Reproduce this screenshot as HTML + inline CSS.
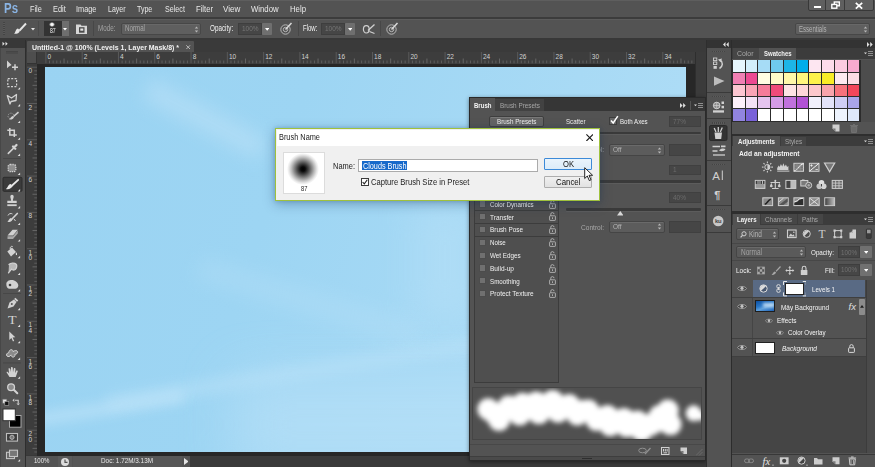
<!DOCTYPE html><html><head><meta charset="utf-8"><title>Photoshop - Brush Name</title><style>
*{box-sizing:border-box;margin:0;padding:0}
html,body{width:875px;height:467px;overflow:hidden;background:#535353;font-family:"Liberation Sans",sans-serif;font-size:9px;color:#dcdcdc}
.a{position:absolute}
.t{position:absolute;white-space:nowrap;line-height:1;transform-origin:0 0}
</style></head><body>
<div class="a" style="left:0px;top:40px;width:875px;height:427px;background:#383838;"></div>
<div class="a" style="left:26px;top:40px;width:680px;height:12px;background:#3a3a3a;"></div>
<div class="a" style="left:26.5px;top:40.5px;width:167.5px;height:12px;background:#535353;border-radius:1px 1px 0 0"></div>
<div class="t" style="left:32.20px;top:43.60px;font-size:8px;color:#f2f2f2;font-weight:bold;transform:scaleX(0.8711);">Untitled-1 @ 100% (Levels 1, Layer Mask/8) *</div>
<svg class="a" style="left:186.3px;top:45px;" width="4.4" height="4.4" viewBox="0 0 4.4 4.4"><path d="M.3 .3L4.100 4.100M4.100 .3L.3 4.100" stroke="#c4c4c4" stroke-width=".9"/></svg>
<div class="a" style="left:26px;top:52.4px;width:669px;height:11.3px;background:#3d3d3d;"></div>
<div class="a" style="left:695px;top:52.4px;width:10.8px;height:404px;background:#3b3b3b;border-left:1px solid #2e2e2e"></div>
<div class="a" style="left:26px;top:63.5px;width:10.5px;height:391px;background:#3c3c3c;"></div>
<div class="a" style="left:26.5px;top:52.4px;width:10px;height:11.3px;background:#4e4e4e;border-right:1px solid #333;border-bottom:1px solid #333"></div>
<div class="a" style="left:36.5px;top:63.7px;width:658.5px;height:392.3px;background:#272727;"></div>
<svg class="a" style="left:37px;top:52.4px;" width="658" height="11.3" viewBox="37 0 658 11.300"><rect x="45.30" y="0" width="1" height="11.300" fill="#5a5a5a"/><text x="47.40" y="7" font-size="6.500" fill="#d2d2d2" font-family="Liberation Sans,sans-serif">0</text><rect x="48.93" y="8.500" width="1" height="2.800" fill="#5e5e5e"/><rect x="52.56" y="8.500" width="1" height="2.800" fill="#5e5e5e"/><rect x="56.19" y="8.500" width="1" height="2.800" fill="#5e5e5e"/><rect x="59.82" y="8.500" width="1" height="2.800" fill="#5e5e5e"/><rect x="63.45" y="6.500" width="1" height="4.800" fill="#666"/><rect x="67.08" y="8.500" width="1" height="2.800" fill="#5e5e5e"/><rect x="70.71" y="8.500" width="1" height="2.800" fill="#5e5e5e"/><rect x="74.34" y="8.500" width="1" height="2.800" fill="#5e5e5e"/><rect x="77.97" y="8.500" width="1" height="2.800" fill="#5e5e5e"/><rect x="81.60" y="0" width="1" height="11.300" fill="#5a5a5a"/><text x="83.70" y="7" font-size="6.500" fill="#d2d2d2" font-family="Liberation Sans,sans-serif">2</text><rect x="85.23" y="8.500" width="1" height="2.800" fill="#5e5e5e"/><rect x="88.86" y="8.500" width="1" height="2.800" fill="#5e5e5e"/><rect x="92.49" y="8.500" width="1" height="2.800" fill="#5e5e5e"/><rect x="96.12" y="8.500" width="1" height="2.800" fill="#5e5e5e"/><rect x="99.75" y="6.500" width="1" height="4.800" fill="#666"/><rect x="103.38" y="8.500" width="1" height="2.800" fill="#5e5e5e"/><rect x="107.01" y="8.500" width="1" height="2.800" fill="#5e5e5e"/><rect x="110.64" y="8.500" width="1" height="2.800" fill="#5e5e5e"/><rect x="114.27" y="8.500" width="1" height="2.800" fill="#5e5e5e"/><rect x="117.90" y="0" width="1" height="11.300" fill="#5a5a5a"/><text x="120.00" y="7" font-size="6.500" fill="#d2d2d2" font-family="Liberation Sans,sans-serif">4</text><rect x="121.53" y="8.500" width="1" height="2.800" fill="#5e5e5e"/><rect x="125.16" y="8.500" width="1" height="2.800" fill="#5e5e5e"/><rect x="128.79" y="8.500" width="1" height="2.800" fill="#5e5e5e"/><rect x="132.42" y="8.500" width="1" height="2.800" fill="#5e5e5e"/><rect x="136.05" y="6.500" width="1" height="4.800" fill="#666"/><rect x="139.68" y="8.500" width="1" height="2.800" fill="#5e5e5e"/><rect x="143.31" y="8.500" width="1" height="2.800" fill="#5e5e5e"/><rect x="146.94" y="8.500" width="1" height="2.800" fill="#5e5e5e"/><rect x="150.57" y="8.500" width="1" height="2.800" fill="#5e5e5e"/><rect x="154.20" y="0" width="1" height="11.300" fill="#5a5a5a"/><text x="156.30" y="7" font-size="6.500" fill="#d2d2d2" font-family="Liberation Sans,sans-serif">6</text><rect x="157.83" y="8.500" width="1" height="2.800" fill="#5e5e5e"/><rect x="161.46" y="8.500" width="1" height="2.800" fill="#5e5e5e"/><rect x="165.09" y="8.500" width="1" height="2.800" fill="#5e5e5e"/><rect x="168.72" y="8.500" width="1" height="2.800" fill="#5e5e5e"/><rect x="172.35" y="6.500" width="1" height="4.800" fill="#666"/><rect x="175.98" y="8.500" width="1" height="2.800" fill="#5e5e5e"/><rect x="179.61" y="8.500" width="1" height="2.800" fill="#5e5e5e"/><rect x="183.24" y="8.500" width="1" height="2.800" fill="#5e5e5e"/><rect x="186.87" y="8.500" width="1" height="2.800" fill="#5e5e5e"/><rect x="190.50" y="0" width="1" height="11.300" fill="#5a5a5a"/><text x="192.60" y="7" font-size="6.500" fill="#d2d2d2" font-family="Liberation Sans,sans-serif">8</text><rect x="194.13" y="8.500" width="1" height="2.800" fill="#5e5e5e"/><rect x="197.76" y="8.500" width="1" height="2.800" fill="#5e5e5e"/><rect x="201.39" y="8.500" width="1" height="2.800" fill="#5e5e5e"/><rect x="205.02" y="8.500" width="1" height="2.800" fill="#5e5e5e"/><rect x="208.65" y="6.500" width="1" height="4.800" fill="#666"/><rect x="212.28" y="8.500" width="1" height="2.800" fill="#5e5e5e"/><rect x="215.91" y="8.500" width="1" height="2.800" fill="#5e5e5e"/><rect x="219.54" y="8.500" width="1" height="2.800" fill="#5e5e5e"/><rect x="223.17" y="8.500" width="1" height="2.800" fill="#5e5e5e"/><rect x="226.80" y="0" width="1" height="11.300" fill="#5a5a5a"/><text x="228.90" y="7" font-size="6.500" fill="#d2d2d2" font-family="Liberation Sans,sans-serif">10</text><rect x="230.43" y="8.500" width="1" height="2.800" fill="#5e5e5e"/><rect x="234.06" y="8.500" width="1" height="2.800" fill="#5e5e5e"/><rect x="237.69" y="8.500" width="1" height="2.800" fill="#5e5e5e"/><rect x="241.32" y="8.500" width="1" height="2.800" fill="#5e5e5e"/><rect x="244.95" y="6.500" width="1" height="4.800" fill="#666"/><rect x="248.58" y="8.500" width="1" height="2.800" fill="#5e5e5e"/><rect x="252.21" y="8.500" width="1" height="2.800" fill="#5e5e5e"/><rect x="255.84" y="8.500" width="1" height="2.800" fill="#5e5e5e"/><rect x="259.47" y="8.500" width="1" height="2.800" fill="#5e5e5e"/><rect x="263.10" y="0" width="1" height="11.300" fill="#5a5a5a"/><text x="265.20" y="7" font-size="6.500" fill="#d2d2d2" font-family="Liberation Sans,sans-serif">12</text><rect x="266.73" y="8.500" width="1" height="2.800" fill="#5e5e5e"/><rect x="270.36" y="8.500" width="1" height="2.800" fill="#5e5e5e"/><rect x="273.99" y="8.500" width="1" height="2.800" fill="#5e5e5e"/><rect x="277.62" y="8.500" width="1" height="2.800" fill="#5e5e5e"/><rect x="281.25" y="6.500" width="1" height="4.800" fill="#666"/><rect x="284.88" y="8.500" width="1" height="2.800" fill="#5e5e5e"/><rect x="288.51" y="8.500" width="1" height="2.800" fill="#5e5e5e"/><rect x="292.14" y="8.500" width="1" height="2.800" fill="#5e5e5e"/><rect x="295.77" y="8.500" width="1" height="2.800" fill="#5e5e5e"/><rect x="299.40" y="0" width="1" height="11.300" fill="#5a5a5a"/><text x="301.50" y="7" font-size="6.500" fill="#d2d2d2" font-family="Liberation Sans,sans-serif">14</text><rect x="303.03" y="8.500" width="1" height="2.800" fill="#5e5e5e"/><rect x="306.66" y="8.500" width="1" height="2.800" fill="#5e5e5e"/><rect x="310.29" y="8.500" width="1" height="2.800" fill="#5e5e5e"/><rect x="313.92" y="8.500" width="1" height="2.800" fill="#5e5e5e"/><rect x="317.55" y="6.500" width="1" height="4.800" fill="#666"/><rect x="321.18" y="8.500" width="1" height="2.800" fill="#5e5e5e"/><rect x="324.81" y="8.500" width="1" height="2.800" fill="#5e5e5e"/><rect x="328.44" y="8.500" width="1" height="2.800" fill="#5e5e5e"/><rect x="332.07" y="8.500" width="1" height="2.800" fill="#5e5e5e"/><rect x="335.70" y="0" width="1" height="11.300" fill="#5a5a5a"/><text x="337.80" y="7" font-size="6.500" fill="#d2d2d2" font-family="Liberation Sans,sans-serif">16</text><rect x="339.33" y="8.500" width="1" height="2.800" fill="#5e5e5e"/><rect x="342.96" y="8.500" width="1" height="2.800" fill="#5e5e5e"/><rect x="346.59" y="8.500" width="1" height="2.800" fill="#5e5e5e"/><rect x="350.22" y="8.500" width="1" height="2.800" fill="#5e5e5e"/><rect x="353.85" y="6.500" width="1" height="4.800" fill="#666"/><rect x="357.48" y="8.500" width="1" height="2.800" fill="#5e5e5e"/><rect x="361.11" y="8.500" width="1" height="2.800" fill="#5e5e5e"/><rect x="364.74" y="8.500" width="1" height="2.800" fill="#5e5e5e"/><rect x="368.37" y="8.500" width="1" height="2.800" fill="#5e5e5e"/><rect x="372.00" y="0" width="1" height="11.300" fill="#5a5a5a"/><text x="374.10" y="7" font-size="6.500" fill="#d2d2d2" font-family="Liberation Sans,sans-serif">18</text><rect x="375.63" y="8.500" width="1" height="2.800" fill="#5e5e5e"/><rect x="379.26" y="8.500" width="1" height="2.800" fill="#5e5e5e"/><rect x="382.89" y="8.500" width="1" height="2.800" fill="#5e5e5e"/><rect x="386.52" y="8.500" width="1" height="2.800" fill="#5e5e5e"/><rect x="390.15" y="6.500" width="1" height="4.800" fill="#666"/><rect x="393.78" y="8.500" width="1" height="2.800" fill="#5e5e5e"/><rect x="397.41" y="8.500" width="1" height="2.800" fill="#5e5e5e"/><rect x="401.04" y="8.500" width="1" height="2.800" fill="#5e5e5e"/><rect x="404.67" y="8.500" width="1" height="2.800" fill="#5e5e5e"/><rect x="408.30" y="0" width="1" height="11.300" fill="#5a5a5a"/><text x="410.40" y="7" font-size="6.500" fill="#d2d2d2" font-family="Liberation Sans,sans-serif">20</text><rect x="411.93" y="8.500" width="1" height="2.800" fill="#5e5e5e"/><rect x="415.56" y="8.500" width="1" height="2.800" fill="#5e5e5e"/><rect x="419.19" y="8.500" width="1" height="2.800" fill="#5e5e5e"/><rect x="422.82" y="8.500" width="1" height="2.800" fill="#5e5e5e"/><rect x="426.45" y="6.500" width="1" height="4.800" fill="#666"/><rect x="430.08" y="8.500" width="1" height="2.800" fill="#5e5e5e"/><rect x="433.71" y="8.500" width="1" height="2.800" fill="#5e5e5e"/><rect x="437.34" y="8.500" width="1" height="2.800" fill="#5e5e5e"/><rect x="440.97" y="8.500" width="1" height="2.800" fill="#5e5e5e"/><rect x="444.60" y="0" width="1" height="11.300" fill="#5a5a5a"/><text x="446.70" y="7" font-size="6.500" fill="#d2d2d2" font-family="Liberation Sans,sans-serif">22</text><rect x="448.23" y="8.500" width="1" height="2.800" fill="#5e5e5e"/><rect x="451.86" y="8.500" width="1" height="2.800" fill="#5e5e5e"/><rect x="455.49" y="8.500" width="1" height="2.800" fill="#5e5e5e"/><rect x="459.12" y="8.500" width="1" height="2.800" fill="#5e5e5e"/><rect x="462.75" y="6.500" width="1" height="4.800" fill="#666"/><rect x="466.38" y="8.500" width="1" height="2.800" fill="#5e5e5e"/><rect x="470.01" y="8.500" width="1" height="2.800" fill="#5e5e5e"/><rect x="473.64" y="8.500" width="1" height="2.800" fill="#5e5e5e"/><rect x="477.27" y="8.500" width="1" height="2.800" fill="#5e5e5e"/><rect x="480.90" y="0" width="1" height="11.300" fill="#5a5a5a"/><text x="483.00" y="7" font-size="6.500" fill="#d2d2d2" font-family="Liberation Sans,sans-serif">24</text><rect x="484.53" y="8.500" width="1" height="2.800" fill="#5e5e5e"/><rect x="488.16" y="8.500" width="1" height="2.800" fill="#5e5e5e"/><rect x="491.79" y="8.500" width="1" height="2.800" fill="#5e5e5e"/><rect x="495.42" y="8.500" width="1" height="2.800" fill="#5e5e5e"/><rect x="499.05" y="6.500" width="1" height="4.800" fill="#666"/><rect x="502.68" y="8.500" width="1" height="2.800" fill="#5e5e5e"/><rect x="506.31" y="8.500" width="1" height="2.800" fill="#5e5e5e"/><rect x="509.94" y="8.500" width="1" height="2.800" fill="#5e5e5e"/><rect x="513.57" y="8.500" width="1" height="2.800" fill="#5e5e5e"/><rect x="517.20" y="0" width="1" height="11.300" fill="#5a5a5a"/><text x="519.30" y="7" font-size="6.500" fill="#d2d2d2" font-family="Liberation Sans,sans-serif">26</text><rect x="520.83" y="8.500" width="1" height="2.800" fill="#5e5e5e"/><rect x="524.46" y="8.500" width="1" height="2.800" fill="#5e5e5e"/><rect x="528.09" y="8.500" width="1" height="2.800" fill="#5e5e5e"/><rect x="531.72" y="8.500" width="1" height="2.800" fill="#5e5e5e"/><rect x="535.35" y="6.500" width="1" height="4.800" fill="#666"/><rect x="538.98" y="8.500" width="1" height="2.800" fill="#5e5e5e"/><rect x="542.61" y="8.500" width="1" height="2.800" fill="#5e5e5e"/><rect x="546.24" y="8.500" width="1" height="2.800" fill="#5e5e5e"/><rect x="549.87" y="8.500" width="1" height="2.800" fill="#5e5e5e"/><rect x="553.50" y="0" width="1" height="11.300" fill="#5a5a5a"/><text x="555.60" y="7" font-size="6.500" fill="#d2d2d2" font-family="Liberation Sans,sans-serif">28</text><rect x="557.13" y="8.500" width="1" height="2.800" fill="#5e5e5e"/><rect x="560.76" y="8.500" width="1" height="2.800" fill="#5e5e5e"/><rect x="564.39" y="8.500" width="1" height="2.800" fill="#5e5e5e"/><rect x="568.02" y="8.500" width="1" height="2.800" fill="#5e5e5e"/><rect x="571.65" y="6.500" width="1" height="4.800" fill="#666"/><rect x="575.28" y="8.500" width="1" height="2.800" fill="#5e5e5e"/><rect x="578.91" y="8.500" width="1" height="2.800" fill="#5e5e5e"/><rect x="582.54" y="8.500" width="1" height="2.800" fill="#5e5e5e"/><rect x="586.17" y="8.500" width="1" height="2.800" fill="#5e5e5e"/><rect x="589.80" y="0" width="1" height="11.300" fill="#5a5a5a"/><text x="591.90" y="7" font-size="6.500" fill="#d2d2d2" font-family="Liberation Sans,sans-serif">30</text><rect x="593.43" y="8.500" width="1" height="2.800" fill="#5e5e5e"/><rect x="597.06" y="8.500" width="1" height="2.800" fill="#5e5e5e"/><rect x="600.69" y="8.500" width="1" height="2.800" fill="#5e5e5e"/><rect x="604.32" y="8.500" width="1" height="2.800" fill="#5e5e5e"/><rect x="607.95" y="6.500" width="1" height="4.800" fill="#666"/><rect x="611.58" y="8.500" width="1" height="2.800" fill="#5e5e5e"/><rect x="615.21" y="8.500" width="1" height="2.800" fill="#5e5e5e"/><rect x="618.84" y="8.500" width="1" height="2.800" fill="#5e5e5e"/><rect x="622.47" y="8.500" width="1" height="2.800" fill="#5e5e5e"/><rect x="626.10" y="0" width="1" height="11.300" fill="#5a5a5a"/><text x="628.20" y="7" font-size="6.500" fill="#d2d2d2" font-family="Liberation Sans,sans-serif">32</text><rect x="629.73" y="8.500" width="1" height="2.800" fill="#5e5e5e"/><rect x="633.36" y="8.500" width="1" height="2.800" fill="#5e5e5e"/><rect x="636.99" y="8.500" width="1" height="2.800" fill="#5e5e5e"/><rect x="640.62" y="8.500" width="1" height="2.800" fill="#5e5e5e"/><rect x="644.25" y="6.500" width="1" height="4.800" fill="#666"/><rect x="647.88" y="8.500" width="1" height="2.800" fill="#5e5e5e"/><rect x="651.51" y="8.500" width="1" height="2.800" fill="#5e5e5e"/><rect x="655.14" y="8.500" width="1" height="2.800" fill="#5e5e5e"/><rect x="658.77" y="8.500" width="1" height="2.800" fill="#5e5e5e"/><rect x="662.40" y="0" width="1" height="11.300" fill="#5a5a5a"/><text x="664.50" y="7" font-size="6.500" fill="#d2d2d2" font-family="Liberation Sans,sans-serif">34</text><rect x="666.03" y="8.500" width="1" height="2.800" fill="#5e5e5e"/><rect x="669.66" y="8.500" width="1" height="2.800" fill="#5e5e5e"/><rect x="673.29" y="8.500" width="1" height="2.800" fill="#5e5e5e"/><rect x="676.92" y="8.500" width="1" height="2.800" fill="#5e5e5e"/><rect x="680.55" y="6.500" width="1" height="4.800" fill="#666"/><rect x="684.18" y="8.500" width="1" height="2.800" fill="#5e5e5e"/><rect x="687.81" y="8.500" width="1" height="2.800" fill="#5e5e5e"/><rect x="691.44" y="8.500" width="1" height="2.800" fill="#5e5e5e"/></svg>
<svg class="a" style="left:26.5px;top:64px;" width="10" height="390" viewBox="0 64 10 390"><rect y="66.70" x="0" height="1" width="10" fill="#5a5a5a"/><text x="1.500" y="73.20" font-size="6.500" fill="#d2d2d2" font-family="Liberation Sans,sans-serif">0</text><rect y="70.33" x="7.300" height="1" width="2.700" fill="#5e5e5e"/><rect y="73.96" x="7.300" height="1" width="2.700" fill="#5e5e5e"/><rect y="77.59" x="7.300" height="1" width="2.700" fill="#5e5e5e"/><rect y="81.22" x="7.300" height="1" width="2.700" fill="#5e5e5e"/><rect y="84.85" x="5.500" height="1" width="4.500" fill="#666"/><rect y="88.48" x="7.300" height="1" width="2.700" fill="#5e5e5e"/><rect y="92.11" x="7.300" height="1" width="2.700" fill="#5e5e5e"/><rect y="95.74" x="7.300" height="1" width="2.700" fill="#5e5e5e"/><rect y="99.37" x="7.300" height="1" width="2.700" fill="#5e5e5e"/><rect y="103.00" x="0" height="1" width="10" fill="#5a5a5a"/><text x="1.500" y="109.50" font-size="6.500" fill="#d2d2d2" font-family="Liberation Sans,sans-serif">2</text><rect y="106.63" x="7.300" height="1" width="2.700" fill="#5e5e5e"/><rect y="110.26" x="7.300" height="1" width="2.700" fill="#5e5e5e"/><rect y="113.89" x="7.300" height="1" width="2.700" fill="#5e5e5e"/><rect y="117.52" x="7.300" height="1" width="2.700" fill="#5e5e5e"/><rect y="121.15" x="5.500" height="1" width="4.500" fill="#666"/><rect y="124.78" x="7.300" height="1" width="2.700" fill="#5e5e5e"/><rect y="128.41" x="7.300" height="1" width="2.700" fill="#5e5e5e"/><rect y="132.04" x="7.300" height="1" width="2.700" fill="#5e5e5e"/><rect y="135.67" x="7.300" height="1" width="2.700" fill="#5e5e5e"/><rect y="139.30" x="0" height="1" width="10" fill="#5a5a5a"/><text x="1.500" y="145.80" font-size="6.500" fill="#d2d2d2" font-family="Liberation Sans,sans-serif">4</text><rect y="142.93" x="7.300" height="1" width="2.700" fill="#5e5e5e"/><rect y="146.56" x="7.300" height="1" width="2.700" fill="#5e5e5e"/><rect y="150.19" x="7.300" height="1" width="2.700" fill="#5e5e5e"/><rect y="153.82" x="7.300" height="1" width="2.700" fill="#5e5e5e"/><rect y="157.45" x="5.500" height="1" width="4.500" fill="#666"/><rect y="161.08" x="7.300" height="1" width="2.700" fill="#5e5e5e"/><rect y="164.71" x="7.300" height="1" width="2.700" fill="#5e5e5e"/><rect y="168.34" x="7.300" height="1" width="2.700" fill="#5e5e5e"/><rect y="171.97" x="7.300" height="1" width="2.700" fill="#5e5e5e"/><rect y="175.60" x="0" height="1" width="10" fill="#5a5a5a"/><text x="1.500" y="182.10" font-size="6.500" fill="#d2d2d2" font-family="Liberation Sans,sans-serif">6</text><rect y="179.23" x="7.300" height="1" width="2.700" fill="#5e5e5e"/><rect y="182.86" x="7.300" height="1" width="2.700" fill="#5e5e5e"/><rect y="186.49" x="7.300" height="1" width="2.700" fill="#5e5e5e"/><rect y="190.12" x="7.300" height="1" width="2.700" fill="#5e5e5e"/><rect y="193.75" x="5.500" height="1" width="4.500" fill="#666"/><rect y="197.38" x="7.300" height="1" width="2.700" fill="#5e5e5e"/><rect y="201.01" x="7.300" height="1" width="2.700" fill="#5e5e5e"/><rect y="204.64" x="7.300" height="1" width="2.700" fill="#5e5e5e"/><rect y="208.27" x="7.300" height="1" width="2.700" fill="#5e5e5e"/><rect y="211.90" x="0" height="1" width="10" fill="#5a5a5a"/><text x="1.500" y="218.40" font-size="6.500" fill="#d2d2d2" font-family="Liberation Sans,sans-serif">8</text><rect y="215.53" x="7.300" height="1" width="2.700" fill="#5e5e5e"/><rect y="219.16" x="7.300" height="1" width="2.700" fill="#5e5e5e"/><rect y="222.79" x="7.300" height="1" width="2.700" fill="#5e5e5e"/><rect y="226.42" x="7.300" height="1" width="2.700" fill="#5e5e5e"/><rect y="230.05" x="5.500" height="1" width="4.500" fill="#666"/><rect y="233.68" x="7.300" height="1" width="2.700" fill="#5e5e5e"/><rect y="237.31" x="7.300" height="1" width="2.700" fill="#5e5e5e"/><rect y="240.94" x="7.300" height="1" width="2.700" fill="#5e5e5e"/><rect y="244.57" x="7.300" height="1" width="2.700" fill="#5e5e5e"/><rect y="248.20" x="0" height="1" width="10" fill="#5a5a5a"/><text x="1.500" y="254.70" font-size="6.500" fill="#d2d2d2" font-family="Liberation Sans,sans-serif">1</text><text x="1.500" y="260.10" font-size="6.500" fill="#d2d2d2" font-family="Liberation Sans,sans-serif">0</text><rect y="251.83" x="7.300" height="1" width="2.700" fill="#5e5e5e"/><rect y="255.46" x="7.300" height="1" width="2.700" fill="#5e5e5e"/><rect y="259.09" x="7.300" height="1" width="2.700" fill="#5e5e5e"/><rect y="262.72" x="7.300" height="1" width="2.700" fill="#5e5e5e"/><rect y="266.35" x="5.500" height="1" width="4.500" fill="#666"/><rect y="269.98" x="7.300" height="1" width="2.700" fill="#5e5e5e"/><rect y="273.61" x="7.300" height="1" width="2.700" fill="#5e5e5e"/><rect y="277.24" x="7.300" height="1" width="2.700" fill="#5e5e5e"/><rect y="280.87" x="7.300" height="1" width="2.700" fill="#5e5e5e"/><rect y="284.50" x="0" height="1" width="10" fill="#5a5a5a"/><text x="1.500" y="291.00" font-size="6.500" fill="#d2d2d2" font-family="Liberation Sans,sans-serif">1</text><text x="1.500" y="296.40" font-size="6.500" fill="#d2d2d2" font-family="Liberation Sans,sans-serif">2</text><rect y="288.13" x="7.300" height="1" width="2.700" fill="#5e5e5e"/><rect y="291.76" x="7.300" height="1" width="2.700" fill="#5e5e5e"/><rect y="295.39" x="7.300" height="1" width="2.700" fill="#5e5e5e"/><rect y="299.02" x="7.300" height="1" width="2.700" fill="#5e5e5e"/><rect y="302.65" x="5.500" height="1" width="4.500" fill="#666"/><rect y="306.28" x="7.300" height="1" width="2.700" fill="#5e5e5e"/><rect y="309.91" x="7.300" height="1" width="2.700" fill="#5e5e5e"/><rect y="313.54" x="7.300" height="1" width="2.700" fill="#5e5e5e"/><rect y="317.17" x="7.300" height="1" width="2.700" fill="#5e5e5e"/><rect y="320.80" x="0" height="1" width="10" fill="#5a5a5a"/><text x="1.500" y="327.30" font-size="6.500" fill="#d2d2d2" font-family="Liberation Sans,sans-serif">1</text><text x="1.500" y="332.70" font-size="6.500" fill="#d2d2d2" font-family="Liberation Sans,sans-serif">4</text><rect y="324.43" x="7.300" height="1" width="2.700" fill="#5e5e5e"/><rect y="328.06" x="7.300" height="1" width="2.700" fill="#5e5e5e"/><rect y="331.69" x="7.300" height="1" width="2.700" fill="#5e5e5e"/><rect y="335.32" x="7.300" height="1" width="2.700" fill="#5e5e5e"/><rect y="338.95" x="5.500" height="1" width="4.500" fill="#666"/><rect y="342.58" x="7.300" height="1" width="2.700" fill="#5e5e5e"/><rect y="346.21" x="7.300" height="1" width="2.700" fill="#5e5e5e"/><rect y="349.84" x="7.300" height="1" width="2.700" fill="#5e5e5e"/><rect y="353.47" x="7.300" height="1" width="2.700" fill="#5e5e5e"/><rect y="357.10" x="0" height="1" width="10" fill="#5a5a5a"/><text x="1.500" y="363.60" font-size="6.500" fill="#d2d2d2" font-family="Liberation Sans,sans-serif">1</text><text x="1.500" y="369.00" font-size="6.500" fill="#d2d2d2" font-family="Liberation Sans,sans-serif">6</text><rect y="360.73" x="7.300" height="1" width="2.700" fill="#5e5e5e"/><rect y="364.36" x="7.300" height="1" width="2.700" fill="#5e5e5e"/><rect y="367.99" x="7.300" height="1" width="2.700" fill="#5e5e5e"/><rect y="371.62" x="7.300" height="1" width="2.700" fill="#5e5e5e"/><rect y="375.25" x="5.500" height="1" width="4.500" fill="#666"/><rect y="378.88" x="7.300" height="1" width="2.700" fill="#5e5e5e"/><rect y="382.51" x="7.300" height="1" width="2.700" fill="#5e5e5e"/><rect y="386.14" x="7.300" height="1" width="2.700" fill="#5e5e5e"/><rect y="389.77" x="7.300" height="1" width="2.700" fill="#5e5e5e"/><rect y="393.40" x="0" height="1" width="10" fill="#5a5a5a"/><text x="1.500" y="399.90" font-size="6.500" fill="#d2d2d2" font-family="Liberation Sans,sans-serif">1</text><text x="1.500" y="405.30" font-size="6.500" fill="#d2d2d2" font-family="Liberation Sans,sans-serif">8</text><rect y="397.03" x="7.300" height="1" width="2.700" fill="#5e5e5e"/><rect y="400.66" x="7.300" height="1" width="2.700" fill="#5e5e5e"/><rect y="404.29" x="7.300" height="1" width="2.700" fill="#5e5e5e"/><rect y="407.92" x="7.300" height="1" width="2.700" fill="#5e5e5e"/><rect y="411.55" x="5.500" height="1" width="4.500" fill="#666"/><rect y="415.18" x="7.300" height="1" width="2.700" fill="#5e5e5e"/><rect y="418.81" x="7.300" height="1" width="2.700" fill="#5e5e5e"/><rect y="422.44" x="7.300" height="1" width="2.700" fill="#5e5e5e"/><rect y="426.07" x="7.300" height="1" width="2.700" fill="#5e5e5e"/><rect y="429.70" x="0" height="1" width="10" fill="#5a5a5a"/><text x="1.500" y="436.20" font-size="6.500" fill="#d2d2d2" font-family="Liberation Sans,sans-serif">2</text><text x="1.500" y="441.60" font-size="6.500" fill="#d2d2d2" font-family="Liberation Sans,sans-serif">0</text><rect y="433.33" x="7.300" height="1" width="2.700" fill="#5e5e5e"/><rect y="436.96" x="7.300" height="1" width="2.700" fill="#5e5e5e"/><rect y="440.59" x="7.300" height="1" width="2.700" fill="#5e5e5e"/><rect y="444.22" x="7.300" height="1" width="2.700" fill="#5e5e5e"/><rect y="447.85" x="5.500" height="1" width="4.500" fill="#666"/><rect y="451.48" x="7.300" height="1" width="2.700" fill="#5e5e5e"/></svg>
<div class="a" style="left:44.800px;top:66.500px;width:641px;height:385.800px;overflow:hidden;background:linear-gradient(108deg,#9ad3f2 0%,#9dd5f3 35%,#a8daf5 70%,#b1def7 100%)"><div class="a" style="left:95px;top:41px;width:130px;height:22px;background:#bfe3f8;filter:blur(9px);transform:rotate(28deg);opacity:.55"></div><div class="a" style="left:-10px;top:335px;width:150px;height:12px;background:#c6e7fa;filter:blur(6px);transform:rotate(-9deg);opacity:.55"></div><div class="a" style="left:60px;top:300px;width:380px;height:12px;background:#c6e7fa;filter:blur(7px);transform:rotate(-9deg);opacity:.45"></div><div class="a" style="left:190px;top:310px;width:290px;height:95px;background:#bce2f8;filter:blur(26px);opacity:.55"></div><div class="a" style="left:370px;top:135px;width:60px;height:120px;background:#bce2f8;filter:blur(18px);opacity:.4"></div><div class="a" style="left:150px;top:225px;width:230px;height:20px;background:#b8e0f7;filter:blur(10px);transform:rotate(17deg);opacity:.4"></div></div>
<div class="a" style="left:26px;top:456px;width:680px;height:11px;background:#535353;"></div>
<div class="a" style="left:190px;top:456px;width:516px;height:11px;background:#3a3a3a;"></div>
<div class="a" style="left:57.5px;top:456px;width:14.5px;height:11px;background:#5a5a5a;"></div>
<div class="a" style="left:72.5px;top:456px;width:109.5px;height:11px;background:#575757;"></div>
<div class="t" style="left:33.60px;top:456.70px;font-size:7.8px;color:#e8e8e8;transform:scaleX(0.7770);">100%</div>
<svg class="a" style="left:60px;top:456.5px;" width="10" height="10" viewBox="0 0 10 10"><circle cx="5" cy="5" r="4" fill="#dcdcdc"/><path d="M5 2.500V5.300H7.500" stroke="#555" stroke-width="1.200" fill="none"/></svg>
<div class="t" style="left:101.00px;top:456.70px;font-size:7.8px;color:#e8e8e8;transform:scaleX(0.8159);">Doc: 1.72M/3.13M</div>
<svg class="a" style="left:183.5px;top:458px;" width="4.5" height="7" viewBox="0 0 4.5 7"><path d="M0 0L4.500 3.500L0 7z" fill="#e4e4e4"/></svg>
<div class="a" style="left:0px;top:0px;width:875px;height:18px;background:#535353;"></div>
<div class="a" style="left:0px;top:0px;width:875px;height:1px;background:#5e5e5e;"></div>
<div class="a" style="left:0px;top:17px;width:875px;height:1.7px;background:#3c3c3c;"></div>
<div class="t" style="left:4.00px;top:0.85px;font-size:14.5px;color:#8ab4e4;font-weight:bold;transform:scaleX(0.7893);">Ps</div>
<div class="t" style="left:30.20px;top:4.60px;font-size:9px;color:#e8e8e8;transform:scaleX(0.8136);">File</div>
<div class="t" style="left:52.50px;top:4.60px;font-size:9px;color:#e8e8e8;transform:scaleX(0.8189);">Edit</div>
<div class="t" style="left:76.20px;top:4.60px;font-size:9px;color:#e8e8e8;transform:scaleX(0.8155);">Image</div>
<div class="t" style="left:108.00px;top:4.60px;font-size:9px;color:#e8e8e8;transform:scaleX(0.7773);">Layer</div>
<div class="t" style="left:137.30px;top:4.60px;font-size:9px;color:#e8e8e8;transform:scaleX(0.7841);">Type</div>
<div class="t" style="left:164.70px;top:4.60px;font-size:9px;color:#e8e8e8;transform:scaleX(0.7955);">Select</div>
<div class="t" style="left:196.00px;top:4.60px;font-size:9px;color:#e8e8e8;transform:scaleX(0.8500);">Filter</div>
<div class="t" style="left:223.00px;top:4.60px;font-size:9px;color:#e8e8e8;transform:scaleX(0.8943);">View</div>
<div class="t" style="left:251.40px;top:4.60px;font-size:9px;color:#e8e8e8;transform:scaleX(0.8622);">Window</div>
<div class="t" style="left:290.00px;top:4.60px;font-size:9px;color:#e8e8e8;transform:scaleX(0.8644);">Help</div>
<div class="a" style="left:808px;top:-1px;width:65.5px;height:12.4px;background:#5f5f5f;border:1px solid #383838;border-radius:0 0 2px 2px"></div>
<div class="a" style="left:825.3px;top:0px;width:1px;height:11px;background:#3a3a3a;"></div>
<div class="a" style="left:843.6px;top:0px;width:1px;height:11px;background:#3a3a3a;"></div>
<div class="a" style="left:814px;top:6.3px;width:7px;height:2.2px;background:#fff;"></div>
<svg class="a" style="left:829.5px;top:1px;" width="11" height="9" viewBox="0 0 11 9"><rect x="4.300" y="1" width="5" height="3.800" fill="none" stroke="#fff" stroke-width="1.400"/><rect x="1.800" y="3.400" width="5" height="3.800" fill="#5f5f5f" stroke="#fff" stroke-width="1.400"/></svg>
<svg class="a" style="left:854.5px;top:2px;" width="8" height="7.5" viewBox="0 0 8 7.5"><path d="M.8 .8L7.200 6.700M7.200 .8L.8 6.700" stroke="#fff" stroke-width="1.700" fill="none"/></svg>
<div class="a" style="left:0px;top:18.7px;width:875px;height:20.3px;background:#535353;"></div>
<div class="a" style="left:0px;top:18.7px;width:875px;height:1px;background:#5c5c5c;"></div>
<div class="a" style="left:0px;top:38px;width:875px;height:2px;background:#383838;"></div>
<div class="a" style="left:3px;top:22px;width:2px;height:13px;background:repeating-linear-gradient(#444 0 1px,#5a5a5a 1px 2px);"></div>
<svg class="a" style="left:13px;top:22px;" width="15" height="13" viewBox="0 0 15 13"><path d="M13 1.5L6.500 8.500" stroke="#e6e6e6" stroke-width="1.9" fill="none"/><path d="M1 11.800c2.400 .3 5.200-.4 6-3.400L5 6.400C2.500 7 2.800 10 1 11.800z" fill="#e6e6e6"/></svg>
<svg class="a" style="left:31px;top:27.5px;" width="4" height="3" viewBox="0 0 4 3"><path d="M0 0h4L2 2.600z" fill="#e6e6e6"/></svg>
<div class="a" style="left:38px;top:21px;width:1px;height:15px;background:#4a4a4a;"></div>
<div class="a" style="left:44px;top:21px;width:18px;height:15px;background:#333;"></div>
<div class="a" style="left:49.400px;top:21.800px;width:5.600px;height:5.600px;border-radius:50%;background:radial-gradient(#fff 0%,#f0f0f0 30%,#333 72%)"></div>
<div class="t" style="left:49.60px;top:28.45px;font-size:6.3px;color:#f4f4f4;transform:scaleX(0.8134);">87</div>
<div class="a" style="left:62px;top:21px;width:6.5px;height:15px;background:#6e6e6e;"></div>
<svg class="a" style="left:63.2px;top:27.5px;" width="4" height="3" viewBox="0 0 4 3"><path d="M0 0h4L2 2.600z" fill="#fff"/></svg>
<svg class="a" style="left:76px;top:23px;" width="11" height="11" viewBox="0 0 11 11"><path d="M0 1.500h4.500l1 1.200H11V11H0z" fill="#d6d6d6"/><rect x="3" y="4.200" width="5.500" height="5.500" fill="#4a4a4a"/><rect x="4.300" y="5.500" width="3" height="2.200" fill="#e4e4e4"/></svg>
<div class="a" style="left:93px;top:21px;width:1px;height:15px;background:#474747;"></div>
<div class="t" style="left:97.50px;top:24.50px;font-size:8.2px;color:#a3a3a3;transform:scaleX(0.7635);">Mode:</div>
<div class="a" style="left:120.5px;top:23px;width:80.5px;height:11.5px;background:#5f5f5f;border:1px solid #474747;border-radius:2px;box-shadow:inset 0 1px 0 #686868"></div>
<div class="t" style="left:125.20px;top:24.50px;font-size:8.2px;color:#a9a9a9;transform:scaleX(0.7568);">Normal</div>
<svg class="a" style="left:194px;top:24.5px;" width="5" height="9" viewBox="0 0 5 9"><path d="M.8 3.600L2.500 1.500L4.200 3.600zM.8 5.400L2.500 7.500L4.200 5.400z" fill="#b8b8b8"/></svg>
<div class="t" style="left:210.00px;top:24.50px;font-size:8.2px;color:#f2f2f2;transform:scaleX(0.7713);">Opacity:</div>
<div class="a" style="left:238.2px;top:23px;width:23.5px;height:11.5px;background:#464646;border:1px solid #3e3e3e"></div>
<div class="t" style="left:241.50px;top:24.70px;font-size:7.8px;color:#767676;transform:scaleX(0.8321);">100%</div>
<div class="a" style="left:261.7px;top:23px;width:10.8px;height:11.5px;background:#6f6f6f;border-radius:1px"></div>
<svg class="a" style="left:265.0px;top:27.8px;" width="4.4" height="3" viewBox="0 0 4.4 3"><path d="M0 0h4.400L2.200 2.800z" fill="#fff"/></svg>
<svg class="a" style="left:279.5px;top:22.3px;" width="13" height="13" viewBox="0 0 13 13"><circle cx="5.500" cy="7.500" r="4.700" fill="none" stroke="#b8b8b8" stroke-width="1"/><circle cx="5.500" cy="7.500" r="2.200" fill="none" stroke="#b8b8b8" stroke-width="1"/><path d="M5.500 7.500L11.500 1" stroke="#dadada" stroke-width="1.500"/></svg>
<div class="a" style="left:297.5px;top:21px;width:1px;height:15px;background:#474747;"></div>
<div class="t" style="left:302.60px;top:24.50px;font-size:8.2px;color:#f2f2f2;transform:scaleX(0.7350);">Flow:</div>
<div class="a" style="left:321.2px;top:23px;width:23.5px;height:11.5px;background:#464646;border:1px solid #3e3e3e"></div>
<div class="t" style="left:324.50px;top:24.70px;font-size:7.8px;color:#767676;transform:scaleX(0.8321);">100%</div>
<div class="a" style="left:344.7px;top:23px;width:10.8px;height:11.5px;background:#6f6f6f;border-radius:1px"></div>
<svg class="a" style="left:348.0px;top:27.8px;" width="4.4" height="3" viewBox="0 0 4.4 3"><path d="M0 0h4.400L2.200 2.800z" fill="#fff"/></svg>
<svg class="a" style="left:361.5px;top:22.5px;" width="14" height="12" viewBox="0 0 14 12"><ellipse cx="4.300" cy="6.300" rx="2.900" ry="3.700" fill="none" stroke="#d0d0d0" stroke-width="1.200"/><path d="M6 7.500L12.500 1.500M7.500 8.500L12.500 10.500" stroke="#d0d0d0" stroke-width="1.300" fill="none"/></svg>
<div class="a" style="left:379.5px;top:21px;width:1px;height:15px;background:#474747;"></div>
<svg class="a" style="left:385.5px;top:22.3px;" width="13" height="13" viewBox="0 0 13 13"><circle cx="5.500" cy="7.500" r="4.700" fill="none" stroke="#b8b8b8" stroke-width="1"/><circle cx="5.500" cy="7.500" r="2.200" fill="none" stroke="#b8b8b8" stroke-width="1"/><path d="M5.500 7.500L11.500 1" stroke="#dadada" stroke-width="1.500"/></svg>
<div class="a" style="left:794.5px;top:23.3px;width:75.6px;height:12px;background:#5f5f5f;border:1px solid #474747;border-radius:2px;box-shadow:inset 0 1px 0 #686868"></div>
<div class="t" style="left:798.80px;top:25.50px;font-size:8.2px;color:#b4b4b4;transform:scaleX(0.7385);">Essentials</div>
<svg class="a" style="left:863px;top:24.7px;" width="5" height="9" viewBox="0 0 5 9"><path d="M.8 3.600L2.500 1.500L4.200 3.600zM.8 5.400L2.500 7.500L4.200 5.400z" fill="#b8b8b8"/></svg>
<div class="a" style="left:0px;top:40px;width:24.5px;height:427px;background:#535353;"></div>
<div class="a" style="left:24.5px;top:40px;width:1.5px;height:427px;background:#2e2e2e;"></div>
<div class="a" style="left:0px;top:40px;width:1px;height:427px;background:#474747;"></div>
<div class="a" style="left:0px;top:40px;width:24.5px;height:8px;background:#383838;"></div>
<svg class="a" style="left:0px;top:40px;" width="25" height="427" viewBox="0 40 25 427"><path d="M2.500 41.800l2.200 2-2.200 2zM5.500 41.800l2.200 2-2.200 2z" fill="#e0e0e0"/><rect x="6" y="51" width="12" height="1" fill="#454545"/><rect x="6" y="52.500" width="12" height="1" fill="#454545"/><path d="M7 60.600L7 68.300L9 66.400L11.600 65z" fill="#d2d2d2"/><path d="M15 64.300v6M12 67.300h6" stroke="#d2d2d2" stroke-width="1.500"/><rect x="7.800" y="78.600" width="8.800" height="8" fill="none" stroke="#d2d2d2" stroke-width="1.200" stroke-dasharray="2 1.400"/><path d="M20.1 87.2v2.400h-2.400z" fill="#e0e0e0"/><path d="M7.300 95.500L11.500 98L16.500 94.500L16 100.500L11 101.500L10 104z" fill="none" stroke="#d2d2d2" stroke-width="1.300" stroke-linejoin="round"/><path d="M20.1 104.1v2.400h-2.400z" fill="#e0e0e0"/><ellipse cx="11" cy="116" rx="3" ry="2.800" fill="none" stroke="#9a9a9a" stroke-width="1" stroke-dasharray="1.500 1"/><path d="M18.500 112.200L13.500 116.500" stroke="#d2d2d2" stroke-width="1.600"/><path d="M9 119.300c1.500 .6 4.300 .2 5-2.300l-1.600-1.100c-1.400 .6-1.700 2.400-3.400 3.400z" fill="#d2d2d2"/><path d="M20.1 120.7v2.400h-2.400z" fill="#e0e0e0"/><path d="M9.800 128v7h7M7.300 130.300h7v6.600" fill="none" stroke="#d2d2d2" stroke-width="1.500"/><path d="M20.1 137.4v2.400h-2.400z" fill="#e0e0e0"/><path d="M8.300 153.400L14 147.700" stroke="#d2d2d2" stroke-width="1.600" stroke-linecap="round"/><path d="M13 146.500l2.300 2.300M14.300 147.300L16.500 145" stroke="#d2d2d2" stroke-width="2.300" stroke-linecap="round"/><path d="M20.1 153.6v2.400h-2.400z" fill="#e0e0e0"/><rect x="3" y="158" width="18" height="1" fill="#474747"/><rect x="8.200" y="164.500" width="7.600" height="7.200" rx="2" fill="#8e8e8e" stroke="#d2d2d2" stroke-width="1.300" stroke-dasharray="1.300 .9"/><path d="M20.1 172.7v2.400h-2.400z" fill="#e0e0e0"/><rect x="3" y="177.300" width="19" height="14" rx="1" fill="#3b3b3b" stroke="#2c2c2c" stroke-width="1"/><path d="M18.200 179.800L11.500 186" stroke="#e8e8e8" stroke-width="1.800" stroke-linecap="round"/><path d="M5.800 189c2.600 .6 6-.2 6.800-3.200l-2-1.800c-2.600 .4-2.600 3.600-4.800 5z" fill="#e8e8e8"/><path d="M20.1 189.1v2.400h-2.400z" fill="#e0e0e0"/><path d="M10.300 196.500a1.700 1.700 0 0 1 3.400 0c0 1.500-.8 2.500-.8 4.200h3.800v2.300H7.300v-2.300h3.800c0-1.700-.8-2.700-.8-4.200z" fill="#d2d2d2"/><rect x="7.300" y="204.300" width="9.400" height="1.800" fill="#d2d2d2"/><path d="M20.1 206.1v2.400h-2.400z" fill="#e0e0e0"/><path d="M17.300 213.500L12 219" stroke="#d2d2d2" stroke-width="1.700" stroke-linecap="round"/><path d="M7.300 221.800c1.800 .4 4.500-.1 5.200-2.400l-1.500-1.300c-1.800 .4-2.100 2.600-3.700 3.700z" fill="#d2d2d2"/><path d="M8 215.500a3 3 0 0 1 4.500-1.500M14 219l1.500 2" stroke="#d2d2d2" stroke-width="1" fill="none"/><path d="M20.1 222.7v2.400h-2.400z" fill="#e0e0e0"/><path d="M7.500 235.500L12.500 229.800H17.800L13 235.500z" fill="#d2d2d2"/><path d="M7.500 236.200H13L17.800 230.600V233.600L13 238.900H7.500z" fill="#a8a8a8"/><path d="M20.1 239.2v2.400h-2.400z" fill="#e0e0e0"/><path d="M7.300 251.500L12 247.500L16 252L11 256.400z" fill="#d2d2d2"/><path d="M10.200 249a1.800 2.200 0 0 1 2.500-2.500" fill="none" stroke="#d2d2d2" stroke-width="1"/><path d="M16.300 252.300c.8 1.200 1 2.400 .2 3-1-.4-1-1.800-.2-3z" fill="#f0f0f0"/><path d="M20.1 255.8v2.400h-2.400z" fill="#e0e0e0"/><path d="M9 264.500c1.500-1.600 5.500-1.800 7.200-.3c1 1.200 .6 4-1 5.300c-1.500 .8-3 .3-3.700-.4L8.500 272.800" fill="#b8b8b8" stroke="#d2d2d2" stroke-width="1.300" stroke-linecap="round"/><path d="M20.1 272.7v2.400h-2.400z" fill="#e0e0e0"/><path d="M6.300 284c0-2.500 2.500-4 5.500-4c3 0 6.500 2.500 6.500 5.500c0 2-1.500 3.200-3 3.200H9c-1.700 0-2.700-2.200-2.700-4.700z" fill="#d2d2d2"/><circle cx="10" cy="285" r="1.300" fill="#444"/><path d="M20.1 289.2v2.400h-2.400z" fill="#e0e0e0"/><rect x="3" y="293" width="18" height="1" fill="#474747"/><path d="M7.500 308.500L9.500 302.500L14 299.500L16.500 302L13.500 306.500z" fill="#d2d2d2"/><path d="M14.800 298.300l2.800 2.800" stroke="#d2d2d2" stroke-width="1.800"/><circle cx="11.800" cy="304" r="1" fill="#555"/><path d="M20.1 307.8v2.400h-2.400z" fill="#e0e0e0"/><text x="7.900" y="324.200" font-family="Liberation Serif,serif" font-size="13.500" fill="#d2d2d2" textLength="8.600" lengthAdjust="spacingAndGlyphs">T</text><path d="M20.1 324.6v2.400h-2.400z" fill="#e0e0e0"/><path d="M9.300 331.500L15.300 337.300L12.600 337.500L14.200 340.800L13 341.400L11.400 338.100L9.300 340z" fill="#d2d2d2"/><path d="M20.1 340.9v2.400h-2.400z" fill="#e0e0e0"/><path d="M7 356c-1.200-1.200 0-3.200 1.800-3.300c.2-1.800 1.200-3.300 3-3c1 .2 1.300 1.200 1.300 2c1.500-1.500 4-1.500 4.500 0c.4 1.500-1.300 2.600-2.800 2.600c.6 1.500-.4 3-2 2.800c-1.200-.2-1.700-1.400-1.700-2.200c-1.200 1.700-3 2.200-4.100 1.100z" fill="#8a8a8a" stroke="#d2d2d2" stroke-width="1"/><path d="M20.1 357.5v2.400h-2.400z" fill="#e0e0e0"/><rect x="3" y="362.400" width="18" height="1" fill="#474747"/><path d="M9.500 377c-1-1.800-2.200-3.300-3-4.800c.6-.8 1.700-.2 2.600 1.200l-.6-4.800c.8-.7 1.600-.3 1.800 .5l.6 3l.1-4.700c.8-.6 1.700-.3 1.800 .4l.2 4.500l.9-4c.8-.5 1.600-.1 1.600 .7l-.5 4.200l1.400-2.700c.8-.3 1.500 .2 1.300 1l-2 5.500z" fill="#d2d2d2"/><path d="M20.1 376.4v2.400h-2.400z" fill="#e0e0e0"/><circle cx="11.100" cy="387.200" r="3.400" fill="#8c8c8c" stroke="#d2d2d2" stroke-width="1.300"/><path d="M13.800 389.800L17.300 393.300" stroke="#d2d2d2" stroke-width="2" stroke-linecap="round"/><rect x="2.800" y="399.200" width="4" height="4" fill="#e8e8e8" stroke="#777" stroke-width=".6"/><rect x="4.800" y="401.400" width="4" height="4" fill="#111" stroke="#aaa" stroke-width=".6"/><path d="M15 400.300h3.200v3.200" fill="none" stroke="#d2d2d2" stroke-width="1.100"/><path d="M14.300 398.500v3.600l-1.900-1.800zM16.400 403.500h3.600l-1.800 1.800z" fill="#d2d2d2"/><rect x="9.500" y="415.500" width="11.500" height="11.700" fill="#000" stroke="#a8a8a8" stroke-width="1"/><rect x="3" y="409" width="12.300" height="11.700" fill="#fff" stroke="#333" stroke-width="1"/><rect x="6.500" y="433.500" width="11" height="7.600" fill="#3c3c3c" stroke="#bdbdbd" stroke-width="1.100"/><circle cx="12" cy="437.300" r="2.100" fill="#777" stroke="#c8c8c8" stroke-width=".8"/><rect x="6.500" y="452.300" width="8" height="6.300" fill="#666" stroke="#c4c4c4" stroke-width="1.100"/><rect x="9.500" y="450.200" width="8" height="6.300" fill="#777" stroke="#c4c4c4" stroke-width="1.100"/><path d="M20.1 459.2v2.400h-2.400z" fill="#e0e0e0"/></svg>
<div class="a" style="left:468.6px;top:97.4px;width:237.60000000000002px;height:363.20000000000005px;background:#535353;border:1px solid #2a2a2a;box-shadow:0 1px 4px rgba(0,0,0,.45)"></div>
<div class="a" style="left:469.6px;top:98.4px;width:235.60000000000002px;height:12.2px;background:#363636;"></div>
<div class="a" style="left:469.6px;top:98.4px;width:25px;height:12.7px;background:#535353;"></div>
<div class="a" style="left:495.3px;top:99px;width:48.5px;height:11.6px;background:#424242;"></div>
<div class="t" style="left:473.50px;top:101.60px;font-size:8px;color:#f4f4f4;font-weight:bold;transform:scaleX(0.7571);">Brush</div>
<div class="t" style="left:499.50px;top:101.60px;font-size:8px;color:#a6a6a6;transform:scaleX(0.7961);">Brush Presets</div>
<svg class="a" style="left:680.3px;top:103.3px;" width="6" height="5" viewBox="0 0 6 5"><path d="M0 0L2.600 2.500L0 5zM3.100 0L5.700 2.500L3.100 5z" fill="#dedede"/></svg>
<div class="a" style="left:690px;top:100.5px;width:1px;height:9px;background:#555;"></div>
<svg class="a" style="left:694.3px;top:103px;" width="9" height="6" viewBox="0 0 9 6"><path d="M0 1.500h3L1.500 3.300z" fill="#d8d8d8"/><path d="M4 .5h5M4 2.500h5M4 4.500h5" stroke="#8e8e8e" stroke-width="1"/></svg>
<div class="a" style="left:488.5px;top:116px;width:55px;height:10.5px;background:#646464;border:1px solid #3e3e3e;border-radius:2px;box-shadow:inset 0 1px 0 #787878"></div>
<div class="t" style="left:496.50px;top:117.60px;font-size:8px;color:#f0f0f0;transform:scaleX(0.7862);">Brush Presets</div>
<div class="t" style="left:565.60px;top:117.60px;font-size:8px;color:#f0f0f0;transform:scaleX(0.7694);">Scatter</div>
<div class="a" style="left:608.7px;top:117px;width:8.3px;height:7.8px;background:#666;border:1px solid #3c3c3c"></div>
<svg class="a" style="left:608.5px;top:114.5px;" width="10" height="10" viewBox="0 0 10 10"><path d="M2 5.500L4.200 8L8.800 1.200" fill="none" stroke="#fff" stroke-width="1.500"/></svg>
<div class="t" style="left:620.00px;top:117.60px;font-size:8px;color:#f0f0f0;transform:scaleX(0.7689);">Both Axes</div>
<div class="a" style="left:669.2px;top:116.2px;width:32.2px;height:10.6px;background:#464646;border:1px solid #404040"></div>
<div class="t" style="left:673.00px;top:117.70px;font-size:7.8px;color:#6c6c6c;transform:scaleX(0.8300);">77%</div>
<div class="a" style="left:566.2px;top:131.8px;width:135.19999999999993px;height:2.6px;background:#3a3a3a;border-radius:1px;box-shadow:0 1px 0 #5c5c5c"></div>
<div class="t" style="left:580.50px;top:145.60px;font-size:8px;color:#a8a8a8;transform:scaleX(0.8211);">Control:</div>
<div class="a" style="left:609px;top:144.3px;width:55.5px;height:11.4px;background:#5c5c5c;border:1px solid #454545;border-radius:2px;box-shadow:inset 0 1px 0 #6a6a6a"></div>
<svg class="a" style="left:657.0px;top:145.5px;" width="5" height="9" viewBox="0 0 5 9"><path d="M.8 3.600L2.500 1.500L4.200 3.600zM.8 5.400L2.500 7.500L4.200 5.400z" fill="#b8b8b8"/></svg>
<div class="t" style="left:613.30px;top:145.60px;font-size:8px;color:#b4b4b4;transform:scaleX(0.8077);">Off</div>
<div class="a" style="left:669.2px;top:144.3px;width:32.2px;height:11.4px;background:#464646;border:1px solid #404040"></div>
<div class="t" style="left:565.60px;top:165.60px;font-size:8px;color:#f0f0f0;transform:scaleX(0.7963);">Count</div>
<div class="a" style="left:669.2px;top:164.6px;width:32.2px;height:10.7px;background:#464646;border:1px solid #404040"></div>
<div class="t" style="left:673.00px;top:165.70px;font-size:7.8px;color:#6c6c6c;transform:scaleX(0.8300);">1</div>
<div class="a" style="left:566.2px;top:180.4px;width:135.19999999999993px;height:2.6px;background:#3a3a3a;border-radius:1px;box-shadow:0 1px 0 #5c5c5c"></div>
<div class="t" style="left:565.60px;top:193.60px;font-size:8px;color:#f0f0f0;transform:scaleX(0.8067);">Count Jitter</div>
<div class="a" style="left:669.2px;top:192.4px;width:32.2px;height:10.7px;background:#464646;border:1px solid #404040"></div>
<div class="t" style="left:673.00px;top:193.70px;font-size:7.8px;color:#6c6c6c;transform:scaleX(0.8300);">40%</div>
<div class="a" style="left:566.2px;top:208px;width:135.19999999999993px;height:2.6px;background:#3a3a3a;border-radius:1px;box-shadow:0 1px 0 #5c5c5c"></div>
<svg class="a" style="left:616.8px;top:211px;" width="6.6" height="4.6" viewBox="0 0 6.6 4.6"><path d="M3.300 0L6.600 4.600H0z" fill="#d8d8d8"/></svg>
<div class="t" style="left:580.50px;top:223.60px;font-size:8px;color:#a8a8a8;transform:scaleX(0.8211);">Control:</div>
<div class="a" style="left:609px;top:221.3px;width:55.5px;height:11.3px;background:#5c5c5c;border:1px solid #454545;border-radius:2px;box-shadow:inset 0 1px 0 #6a6a6a"></div>
<svg class="a" style="left:657.0px;top:222.45000000000002px;" width="5" height="9" viewBox="0 0 5 9"><path d="M.8 3.600L2.500 1.500L4.200 3.600zM.8 5.400L2.500 7.500L4.200 5.400z" fill="#b8b8b8"/></svg>
<div class="t" style="left:613.30px;top:222.60px;font-size:8px;color:#b4b4b4;transform:scaleX(0.8077);">Off</div>
<div class="a" style="left:669.2px;top:221.3px;width:32.2px;height:11.3px;background:#464646;border:1px solid #404040"></div>
<div class="a" style="left:473.8px;top:130px;width:84.8px;height:253px;background:#4f4f4f;border:1px solid #3c3c3c"></div>
<div class="a" style="left:474.8px;top:197.4px;width:82.8px;height:0.9px;background:#3c3c3c;"></div>
<div class="a" style="left:474.8px;top:210.3px;width:82.8px;height:0.9px;background:#3c3c3c;"></div>
<div class="a" style="left:474.8px;top:223.3px;width:82.8px;height:0.9px;background:#3c3c3c;"></div>
<div class="a" style="left:474.8px;top:236.3px;width:82.8px;height:0.9px;background:#3c3c3c;"></div>
<div class="a" style="left:479px;top:200.2px;width:7.4px;height:7.4px;background:#707070;border:1px solid #4c4c4c"></div>
<div class="t" style="left:490.30px;top:200.60px;font-size:8px;color:#f0f0f0;transform:scaleX(0.7722);">Color Dynamics</div>
<svg class="a" style="left:549.2px;top:199.5px;" width="7" height="9" viewBox="0 0 7 9"><rect x=".6" y="3.800" width="5.800" height="4.600" rx=".5" fill="none" stroke="#b4b4b4" stroke-width=".9"/><path d="M1.800 3.800v-1.600a1.600 1.600 0 0 1 3.200 0" fill="none" stroke="#b4b4b4" stroke-width=".9"/><rect x="3" y="5.300" width="1" height="1.600" fill="#b4b4b4"/></svg>
<div class="a" style="left:479px;top:212.89999999999998px;width:7.4px;height:7.4px;background:#707070;border:1px solid #4c4c4c"></div>
<div class="t" style="left:490.30px;top:213.60px;font-size:8px;color:#f0f0f0;transform:scaleX(0.8139);">Transfer</div>
<svg class="a" style="left:549.2px;top:212.2px;" width="7" height="9" viewBox="0 0 7 9"><rect x=".6" y="3.800" width="5.800" height="4.600" rx=".5" fill="none" stroke="#b4b4b4" stroke-width=".9"/><path d="M1.800 3.800v-1.600a1.600 1.600 0 0 1 3.200 0" fill="none" stroke="#b4b4b4" stroke-width=".9"/><rect x="3" y="5.300" width="1" height="1.600" fill="#b4b4b4"/></svg>
<div class="a" style="left:479px;top:225.89999999999998px;width:7.4px;height:7.4px;background:#707070;border:1px solid #4c4c4c"></div>
<div class="t" style="left:490.30px;top:225.60px;font-size:8px;color:#f0f0f0;transform:scaleX(0.7979);">Brush Pose</div>
<svg class="a" style="left:549.2px;top:225.2px;" width="7" height="9" viewBox="0 0 7 9"><rect x=".6" y="3.800" width="5.800" height="4.600" rx=".5" fill="none" stroke="#b4b4b4" stroke-width=".9"/><path d="M1.800 3.800v-1.600a1.600 1.600 0 0 1 3.200 0" fill="none" stroke="#b4b4b4" stroke-width=".9"/><rect x="3" y="5.300" width="1" height="1.600" fill="#b4b4b4"/></svg>
<div class="a" style="left:479px;top:238.79999999999998px;width:7.4px;height:7.4px;background:#707070;border:1px solid #4c4c4c"></div>
<div class="t" style="left:490.30px;top:238.60px;font-size:8px;color:#f0f0f0;transform:scaleX(0.7676);">Noise</div>
<svg class="a" style="left:549.2px;top:238.1px;" width="7" height="9" viewBox="0 0 7 9"><rect x=".6" y="3.800" width="5.800" height="4.600" rx=".5" fill="none" stroke="#b4b4b4" stroke-width=".9"/><path d="M1.800 3.800v-1.600a1.600 1.600 0 0 1 3.200 0" fill="none" stroke="#b4b4b4" stroke-width=".9"/><rect x="3" y="5.300" width="1" height="1.600" fill="#b4b4b4"/></svg>
<div class="a" style="left:479px;top:251.5px;width:7.4px;height:7.4px;background:#707070;border:1px solid #4c4c4c"></div>
<div class="t" style="left:490.30px;top:251.60px;font-size:8px;color:#f0f0f0;transform:scaleX(0.7875);">Wet Edges</div>
<svg class="a" style="left:549.2px;top:250.8px;" width="7" height="9" viewBox="0 0 7 9"><rect x=".6" y="3.800" width="5.800" height="4.600" rx=".5" fill="none" stroke="#b4b4b4" stroke-width=".9"/><path d="M1.800 3.800v-1.600a1.600 1.600 0 0 1 3.200 0" fill="none" stroke="#b4b4b4" stroke-width=".9"/><rect x="3" y="5.300" width="1" height="1.600" fill="#b4b4b4"/></svg>
<div class="a" style="left:479px;top:264.2px;width:7.4px;height:7.4px;background:#707070;border:1px solid #4c4c4c"></div>
<div class="t" style="left:490.30px;top:264.60px;font-size:8px;color:#f0f0f0;transform:scaleX(0.8176);">Build-up</div>
<svg class="a" style="left:549.2px;top:263.5px;" width="7" height="9" viewBox="0 0 7 9"><rect x=".6" y="3.800" width="5.800" height="4.600" rx=".5" fill="none" stroke="#b4b4b4" stroke-width=".9"/><path d="M1.800 3.800v-1.600a1.600 1.600 0 0 1 3.200 0" fill="none" stroke="#b4b4b4" stroke-width=".9"/><rect x="3" y="5.300" width="1" height="1.600" fill="#b4b4b4"/></svg>
<div class="a" style="left:479px;top:277.0px;width:7.4px;height:7.4px;background:#707070;border:1px solid #4c4c4c"></div>
<div class="t" style="left:490.30px;top:277.60px;font-size:8px;color:#f0f0f0;transform:scaleX(0.7765);">Smoothing</div>
<svg class="a" style="left:549.2px;top:276.3px;" width="7" height="9" viewBox="0 0 7 9"><rect x=".6" y="3.800" width="5.800" height="4.600" rx=".5" fill="none" stroke="#b4b4b4" stroke-width=".9"/><path d="M1.800 3.800v-1.600a1.600 1.600 0 0 1 3.200 0" fill="none" stroke="#b4b4b4" stroke-width=".9"/><rect x="3" y="5.300" width="1" height="1.600" fill="#b4b4b4"/></svg>
<div class="a" style="left:479px;top:289.7px;width:7.4px;height:7.4px;background:#707070;border:1px solid #4c4c4c"></div>
<div class="t" style="left:490.30px;top:289.60px;font-size:8px;color:#f0f0f0;transform:scaleX(0.8144);">Protect Texture</div>
<svg class="a" style="left:549.2px;top:289.0px;" width="7" height="9" viewBox="0 0 7 9"><rect x=".6" y="3.800" width="5.800" height="4.600" rx=".5" fill="none" stroke="#b4b4b4" stroke-width=".9"/><path d="M1.800 3.800v-1.600a1.600 1.600 0 0 1 3.200 0" fill="none" stroke="#b4b4b4" stroke-width=".9"/><rect x="3" y="5.300" width="1" height="1.600" fill="#b4b4b4"/></svg>
<div class="a" style="left:472.4px;top:387.2px;width:229.8px;height:52.8px;background:#505050;border:1px solid #454545;overflow:hidden"><svg width="230" height="53" viewBox="472.400 387.200 230 53" style="position:absolute;left:-1px;top:-1px"><defs><filter id="bl" x="-20%" y="-50%" width="140%" height="200%"><feGaussianBlur stdDeviation="2.800"/></filter></defs><g filter="url(#bl)" fill="#fff"><circle cx="488.6" cy="409.3" r="10.900"/><circle cx="499.5" cy="420.3" r="10.900"/><circle cx="509" cy="406.6" r="10.900"/><circle cx="522.9" cy="403.8" r="10.900"/><circle cx="520" cy="414.8" r="10.900"/><circle cx="536.6" cy="402.5" r="10.900"/><circle cx="539.3" cy="413.4" r="10.900"/><circle cx="553" cy="401.0" r="10.900"/><circle cx="558.5" cy="412.0" r="10.900"/><circle cx="569.5" cy="405.2" r="10.900"/><circle cx="577.7" cy="414.8" r="10.900"/><circle cx="588.7" cy="410.7" r="10.900"/><circle cx="597" cy="420.3" r="10.900"/><circle cx="607.9" cy="416.2" r="10.900"/><circle cx="610.6" cy="425.5" r="10.900"/><circle cx="624.3" cy="419.0" r="10.900"/><circle cx="627" cy="426.5" r="10.900"/><circle cx="638" cy="421.7" r="10.900"/><circle cx="642.2" cy="430.5" r="10.900"/><circle cx="651.8" cy="424.4" r="10.900"/><circle cx="660" cy="416.2" r="10.900"/><circle cx="668.2" cy="410.7" r="10.900"/><circle cx="671" cy="424.4" r="10.900"/><circle cx="494" cy="413.0" r="10.900"/><circle cx="530" cy="409.0" r="10.900"/><circle cx="546" cy="407.0" r="10.900"/><circle cx="583" cy="411.0" r="10.900"/><circle cx="603" cy="418.0" r="10.900"/><circle cx="617" cy="422.0" r="10.900"/><circle cx="633" cy="426.0" r="10.900"/><circle cx="648" cy="426.0" r="10.900"/><circle cx="662" cy="421.0" r="10.900"/><circle cx="694" cy="413.5" r="8"/><circle cx="700" cy="416.0" r="5"/></g></svg></div>
<div class="a" style="left:469.6px;top:444.3px;width:235.6px;height:0.9px;background:#484848;"></div>
<svg class="a" style="left:638px;top:447px;" width="14" height="8" viewBox="0 0 14 8"><ellipse cx="4.500" cy="3.500" rx="3.800" ry="2.300" fill="none" stroke="#909090" stroke-width="1"/><path d="M7 7L12.500 1" stroke="#909090" stroke-width="1.300"/></svg>
<svg class="a" style="left:661px;top:446.5px;" width="8.5" height="8" viewBox="0 0 8.5 8"><rect x=".5" y=".5" width="7.500" height="7" fill="#555" stroke="#d0d0d0" stroke-width="1"/><path d="M2.500 2v2.500M4.300 2v2.500M6.100 2v2.500M2.500 5.800h3.600" stroke="#e0e0e0" stroke-width=".9"/></svg>
<svg class="a" style="left:679.8px;top:447px;" width="7.5" height="7.5" viewBox="0 0 7.5 7.5"><path d="M.5 .5h6.500v6.500H3.500l-3-3z" fill="#cfcfcf"/><path d="M.5 4h3v3" fill="#777"/></svg>
<svg class="a" style="left:696px;top:449px;" width="7" height="7" viewBox="0 0 7 7"><path d="M6.500 0L0 6.500M6.500 3L3 6.500" stroke="#6a6a6a" stroke-width="1"/></svg>
<div class="a" style="left:469.6px;top:456.2px;width:235.6px;height:3.6px;background:#4a4a4a;border-top:1px solid #3e3e3e"></div>
<div class="a" style="left:582px;top:457.5px;width:10px;height:1px;background:#2e2e2e;"></div>
<div class="a" style="left:705.8px;top:40px;width:1.4px;height:427px;background:#2e2e2e;"></div>
<div class="a" style="left:707.2px;top:40px;width:23.5px;height:427px;background:#535353;"></div>
<div class="a" style="left:730.6px;top:40px;width:1.4px;height:427px;background:#2c2c2c;"></div>
<div class="a" style="left:707.2px;top:40px;width:23.5px;height:7.5px;background:#333;"></div>
<svg class="a" style="left:722.5px;top:41.5px;" width="6" height="5" viewBox="0 0 6 5"><path d="M2.500 0L0 2.500L2.500 5zM5.700 0L3.200 2.500L5.700 5z" fill="#e0e0e0"/></svg>
<div class="a" style="left:707.2px;top:91.5px;width:23.5px;height:1.2px;background:#3a3a3a;"></div>
<div class="a" style="left:707.2px;top:118px;width:23.5px;height:1.2px;background:#3a3a3a;"></div>
<div class="a" style="left:707.2px;top:160px;width:23.5px;height:1.2px;background:#3a3a3a;"></div>
<div class="a" style="left:707.2px;top:205px;width:23.5px;height:1.2px;background:#3a3a3a;"></div>
<div class="a" style="left:707.2px;top:231.5px;width:23.5px;height:1.2px;background:#3a3a3a;"></div>
<div class="a" style="left:712.3px;top:50.5px;width:12.5px;height:1.6px;background:repeating-linear-gradient(90deg,#444 0 1px,#5c5c5c 1px 2px);"></div>
<div class="a" style="left:712.3px;top:95.5px;width:12.5px;height:1.6px;background:repeating-linear-gradient(90deg,#444 0 1px,#5c5c5c 1px 2px);"></div>
<div class="a" style="left:712.3px;top:122px;width:12.5px;height:1.6px;background:repeating-linear-gradient(90deg,#444 0 1px,#5c5c5c 1px 2px);"></div>
<div class="a" style="left:712.3px;top:163.5px;width:12.5px;height:1.6px;background:repeating-linear-gradient(90deg,#444 0 1px,#5c5c5c 1px 2px);"></div>
<div class="a" style="left:712.3px;top:208.5px;width:12.5px;height:1.6px;background:repeating-linear-gradient(90deg,#444 0 1px,#5c5c5c 1px 2px);"></div>
<svg class="a" style="left:706px;top:40px;" width="26" height="427" viewBox="706 40 26 427"><rect x="713.500" y="58" width="3.300" height="2.600" fill="none" stroke="#d0d0d0" stroke-width=".9"/><rect x="713.500" y="62" width="3.300" height="2.600" fill="none" stroke="#d0d0d0" stroke-width=".9"/><rect x="713.500" y="66" width="3.300" height="2.800" fill="#d0d0d0"/><path d="M719.500 68.500c3.500-2 3.800-6.500 .6-8.500" fill="none" stroke="#d0d0d0" stroke-width="1.500"/><path d="M718 59.500l4-.9l-1.500 3.600z" fill="#d0d0d0"/><path d="M714 76.500L724.500 81L714 85.800z" fill="#bdbdbd"/><circle cx="716.700" cy="105.500" r="3.300" fill="#8a8a8a" stroke="#d0d0d0" stroke-width="1"/><path d="M713.400 105.500h6.600M716.700 102.200v6.600" stroke="#d0d0d0" stroke-width=".7"/><rect x="721.500" y="101.500" width="2.500" height="2.500" fill="#d0d0d0"/><rect x="721.500" y="105.800" width="2.500" height="2.500" fill="#d0d0d0"/><rect x="713" y="110.300" width="11" height="2.300" fill="#d0d0d0"/><rect x="709.500" y="125.500" width="17.500" height="15" rx="1.500" fill="#333" stroke="#2a2a2a"/><path d="M714.500 132.500h7.500l-.8 6.500h-5.900z" fill="#d0d0d0"/><path d="M716 132l-1.800-4M718.300 132v-5M720.300 132l2-4.500" stroke="#d0d0d0" stroke-width="1.300"/><path d="M712.500 146.500h7.500M712.500 151h5" stroke="#d0d0d0" stroke-width="1.300"/><path d="M719 150.500c1.500-2.500 5-2.500 6.500-1.500c-1 2.200-4 3-6.500 1.500zM721 145.500h4.500v1.800H721z" fill="#d0d0d0"/><path d="M713 155h12" stroke="#d0d0d0" stroke-width="1.300"/><text x="712.300" y="179.500" font-family="Liberation Sans,sans-serif" font-size="11.500" fill="#d0d0d0">A</text><rect x="721.800" y="170.500" width="1" height="9.500" fill="#d0d0d0"/><text x="714.300" y="198.500" font-family="Liberation Sans,sans-serif" font-size="11" font-weight="bold" fill="#d0d0d0">¶</text><circle cx="718.200" cy="221" r="5.300" fill="#c8c8c8"/><text x="714.900" y="223" font-family="Liberation Sans,sans-serif" font-size="5.800" font-weight="bold" fill="#444">ku</text></svg>
<div class="a" style="left:732px;top:40px;width:143px;height:427px;background:#535353;"></div>
<div class="a" style="left:732px;top:40px;width:143px;height:7.5px;background:#333;"></div>
<svg class="a" style="left:866.5px;top:41.5px;" width="6" height="5" viewBox="0 0 6 5"><path d="M0 0L2.500 2.500L0 5zM3.200 0L5.700 2.500L3.200 5z" fill="#e0e0e0"/></svg>
<div class="a" style="left:732px;top:47.5px;width:143px;height:11.5px;background:#3c3c3c;"></div>
<div class="a" style="left:732.5px;top:48.3px;width:26px;height:10.7px;background:#464646;"></div>
<div class="a" style="left:758.8px;top:48px;width:37.5px;height:11px;background:#535353;"></div>
<div class="t" style="left:737.00px;top:49.60px;font-size:8px;color:#a8a8a8;transform:scaleX(0.8631);">Color</div>
<div class="t" style="left:763.70px;top:49.60px;font-size:8px;color:#f2f2f2;font-weight:bold;transform:scaleX(0.7505);">Swatches</div>
<svg class="a" style="left:863.5px;top:50.5px;" width="9" height="6" viewBox="0 0 9 6"><path d="M0 1.500h3L1.500 3.300z" fill="#d8d8d8"/><path d="M4 .5h5M4 2.500h5M4 4.500h5" stroke="#8e8e8e" stroke-width="1"/></svg>
<div class="a" style="left:732.3px;top:59.5px;width:128.8px;height:62.3px;background:#2c2c2c;"></div>
<div class="a" style="left:732.9px;top:60.2px;width:11.76px;height:11.32px;background:#e6f6fd;"></div>
<div class="a" style="left:745.66px;top:60.2px;width:11.76px;height:11.32px;background:#d2eefa;"></div>
<div class="a" style="left:758.42px;top:60.2px;width:11.76px;height:11.32px;background:#a6dcf6;"></div>
<div class="a" style="left:771.18px;top:60.2px;width:11.76px;height:11.32px;background:#6fcaee;"></div>
<div class="a" style="left:783.94px;top:60.2px;width:11.76px;height:11.32px;background:#1db5e7;"></div>
<div class="a" style="left:796.7px;top:60.2px;width:11.76px;height:11.32px;background:#00adea;"></div>
<div class="a" style="left:809.46px;top:60.2px;width:11.76px;height:11.32px;background:#fde6f1;"></div>
<div class="a" style="left:822.22px;top:60.2px;width:11.76px;height:11.32px;background:#fddceb;"></div>
<div class="a" style="left:834.98px;top:60.2px;width:11.76px;height:11.32px;background:#fbcbe1;"></div>
<div class="a" style="left:847.74px;top:60.2px;width:11.76px;height:11.32px;background:#f8aad0;"></div>
<div class="a" style="left:732.9px;top:72.52px;width:11.76px;height:11.32px;background:#f07fb3;"></div>
<div class="a" style="left:745.66px;top:72.52px;width:11.76px;height:11.32px;background:#ec4a92;"></div>
<div class="a" style="left:758.42px;top:72.52px;width:11.76px;height:11.32px;background:#fffde2;"></div>
<div class="a" style="left:771.18px;top:72.52px;width:11.76px;height:11.32px;background:#fffbc9;"></div>
<div class="a" style="left:783.94px;top:72.52px;width:11.76px;height:11.32px;background:#fff9a9;"></div>
<div class="a" style="left:796.7px;top:72.52px;width:11.76px;height:11.32px;background:#fff67e;"></div>
<div class="a" style="left:809.46px;top:72.52px;width:11.76px;height:11.32px;background:#fdf24b;"></div>
<div class="a" style="left:822.22px;top:72.52px;width:11.76px;height:11.32px;background:#f9ec27;"></div>
<div class="a" style="left:834.98px;top:72.52px;width:11.76px;height:11.32px;background:#fdeaf0;"></div>
<div class="a" style="left:847.74px;top:72.52px;width:11.76px;height:11.32px;background:#fddde5;"></div>
<div class="a" style="left:732.9px;top:84.84px;width:11.76px;height:11.32px;background:#fcc5d1;"></div>
<div class="a" style="left:745.66px;top:84.84px;width:11.76px;height:11.32px;background:#f9a4b6;"></div>
<div class="a" style="left:758.42px;top:84.84px;width:11.76px;height:11.32px;background:#f57c9a;"></div>
<div class="a" style="left:771.18px;top:84.84px;width:11.76px;height:11.32px;background:#f04a7a;"></div>
<div class="a" style="left:783.94px;top:84.84px;width:11.76px;height:11.32px;background:#fde4e4;"></div>
<div class="a" style="left:796.7px;top:84.84px;width:11.76px;height:11.32px;background:#fdd6d9;"></div>
<div class="a" style="left:809.46px;top:84.84px;width:11.76px;height:11.32px;background:#fcc7cc;"></div>
<div class="a" style="left:822.22px;top:84.84px;width:11.76px;height:11.32px;background:#f9a4ac;"></div>
<div class="a" style="left:834.98px;top:84.84px;width:11.76px;height:11.32px;background:#f6727c;"></div>
<div class="a" style="left:847.74px;top:84.84px;width:11.76px;height:11.32px;background:#f2465a;"></div>
<div class="a" style="left:732.9px;top:97.16px;width:11.76px;height:11.32px;background:#fcf0fa;"></div>
<div class="a" style="left:745.66px;top:97.16px;width:11.76px;height:11.32px;background:#f3e2f6;"></div>
<div class="a" style="left:758.42px;top:97.16px;width:11.76px;height:11.32px;background:#e5c4ef;"></div>
<div class="a" style="left:771.18px;top:97.16px;width:11.76px;height:11.32px;background:#d49ce6;"></div>
<div class="a" style="left:783.94px;top:97.16px;width:11.76px;height:11.32px;background:#c071dc;"></div>
<div class="a" style="left:796.7px;top:97.16px;width:11.76px;height:11.32px;background:#b152d4;"></div>
<div class="a" style="left:809.46px;top:97.16px;width:11.76px;height:11.32px;background:#f1f0fc;"></div>
<div class="a" style="left:822.22px;top:97.16px;width:11.76px;height:11.32px;background:#e3e3f9;"></div>
<div class="a" style="left:834.98px;top:97.16px;width:11.76px;height:11.32px;background:#cfcef4;"></div>
<div class="a" style="left:847.74px;top:97.16px;width:11.76px;height:11.32px;background:#a9a5e9;"></div>
<div class="a" style="left:732.9px;top:109.48px;width:11.76px;height:11.32px;background:#9184e0;"></div>
<div class="a" style="left:745.66px;top:109.48px;width:11.76px;height:11.32px;background:#7962d9;"></div>
<div class="a" style="left:758.42px;top:109.48px;width:11.76px;height:11.32px;background:#ffffff;"></div>
<div class="a" style="left:771.18px;top:109.48px;width:11.76px;height:11.32px;background:#ffffff;"></div>
<div class="a" style="left:783.94px;top:109.48px;width:11.76px;height:11.32px;background:#ffffff;"></div>
<div class="a" style="left:796.7px;top:109.48px;width:11.76px;height:11.32px;background:#ffffff;"></div>
<div class="a" style="left:809.46px;top:109.48px;width:11.76px;height:11.32px;background:#ffffff;"></div>
<div class="a" style="left:822.22px;top:109.48px;width:11.76px;height:11.32px;background:#ffffff;"></div>
<div class="a" style="left:834.98px;top:109.48px;width:11.76px;height:11.32px;background:#edf3fd;"></div>
<div class="a" style="left:847.74px;top:109.48px;width:11.76px;height:11.32px;background:#dfe9fb;"></div>
<div class="a" style="left:861.1px;top:59.5px;width:13.9px;height:62.3px;background:#4d4d4d;"></div>
<div class="a" style="left:732px;top:121.8px;width:143px;height:12px;background:#535353;"></div>
<svg class="a" style="left:832px;top:124px;" width="8" height="8" viewBox="0 0 8 8"><path d="M.5 .5h7v7H3.500l-3-3z" fill="#cfcfcf"/><path d="M.5 4.500h3v3" fill="#777"/></svg>
<svg class="a" style="left:849.5px;top:123.5px;" width="8" height="9" viewBox="0 0 8 9"><path d="M1 2.500h6l-.6 6H1.600zM0 1.500h8M3 .5h2" fill="#6a6a6a" stroke="#767676" stroke-width=".8"/></svg>
<div class="a" style="left:732px;top:134px;width:143px;height:2px;background:#2e2e2e;"></div>
<div class="a" style="left:732px;top:136px;width:143px;height:10px;background:#3c3c3c;"></div>
<div class="a" style="left:732.5px;top:136px;width:47px;height:10.5px;background:#535353;"></div>
<div class="a" style="left:780.5px;top:136.5px;width:25.5px;height:9.5px;background:#464646;"></div>
<div class="t" style="left:737.50px;top:137.60px;font-size:8px;color:#f2f2f2;font-weight:bold;transform:scaleX(0.7637);">Adjustments</div>
<div class="t" style="left:784.80px;top:137.60px;font-size:8px;color:#a8a8a8;transform:scaleX(0.7803);">Styles</div>
<svg class="a" style="left:863.5px;top:138.5px;" width="9" height="6" viewBox="0 0 9 6"><path d="M0 1.500h3L1.500 3.300z" fill="#d8d8d8"/><path d="M4 .5h5M4 2.500h5M4 4.500h5" stroke="#8e8e8e" stroke-width="1"/></svg>
<div class="t" style="left:738.50px;top:149.60px;font-size:8px;color:#f4f4f4;font-weight:bold;transform:scaleX(0.8402);">Add an adjustment</div>
<svg class="a" style="left:750px;top:158px;" width="100" height="52" viewBox="750 158 100 52"><defs><linearGradient id="gmg"><stop offset="0" stop-color="#444"/><stop offset="1" stop-color="#bbb"/></linearGradient></defs><circle cx="767.4" cy="167.1" r="2.600" fill="#555" stroke="#cfcfcf" stroke-width="1"/><path d="M767.4 164.5a2.600 2.600 0 0 1 0 5.200z" fill="#cfcfcf"/><path d="M771.30 167.10L772.90 167.10" stroke="#cfcfcf" stroke-width="1.100"/><path d="M770.16 169.86L771.29 170.99" stroke="#cfcfcf" stroke-width="1.100"/><path d="M767.40 171.00L767.40 172.60" stroke="#cfcfcf" stroke-width="1.100"/><path d="M764.64 169.86L763.51 170.99" stroke="#cfcfcf" stroke-width="1.100"/><path d="M763.50 167.10L761.90 167.10" stroke="#cfcfcf" stroke-width="1.100"/><path d="M764.64 164.34L763.51 163.21" stroke="#cfcfcf" stroke-width="1.100"/><path d="M767.40 163.20L767.40 161.60" stroke="#cfcfcf" stroke-width="1.100"/><path d="M770.16 164.34L771.29 163.21" stroke="#cfcfcf" stroke-width="1.100"/><path d="M777.200 170v-2l1.500-2.500l1 1.500l1.200-3l1.300 2.500l1.200-3.300l1.300 3.300l1.200-2l1.200 2.500l1.300-1v4z" fill="#cfcfcf"/><rect x="777.200" y="170.600" width="12.200" height="1" fill="#cfcfcf"/><rect x="793.9" y="163.3" width="9.6" height="8" fill="#777" stroke="#cfcfcf" stroke-width="1"/><path d="M794 171c4-.5 5-6.500 9.500-7.500" fill="none" stroke="#f0f0f0" stroke-width="1.100"/><path d="M797 163.300v8M800.300 163.300v8M794 166h9.500M794 168.700h9.500" stroke="#9a9a9a" stroke-width=".5"/><rect x="809.4" y="163.3" width="9.6" height="8" fill="#777" stroke="#cfcfcf" stroke-width="1"/><path d="M809.400 171.300L819 163.300" stroke="#f0f0f0" stroke-width="1"/><path d="M811.500 164.300v2.400M810.300 165.500h2.400M815.500 169.500h2.400" stroke="#eee" stroke-width=".8"/><path d="M824.500 163h10.200L829.600 171.700z" fill="#777" stroke="#cfcfcf" stroke-width="1.200"/><rect x="755.3" y="180.4" width="9.6" height="8" fill="#999" stroke="#cfcfcf" stroke-width="1"/><rect x="755.800" y="180.9" width="8.600" height="3" fill="#3c3c3c"/><path d="M758 180.9v3M760 180.9v3M762.500 180.9v3" stroke="#ddd" stroke-width=".8"/><path d="M775.300 181v7M772 188.500h6.600M770.500 182.500h9.600" stroke="#cfcfcf" stroke-width="1.100"/><path d="M769.800 186.300l1.500-3.500l1.500 3.500a1.600 1.400 0 0 1-3 0zM777.800 186.300l1.500-3.500l1.500 3.500a1.600 1.400 0 0 1-3 0z" fill="#cfcfcf"/><circle cx="775.300" cy="180.800" r="1" fill="#cfcfcf"/><rect x="785.9" y="180.4" width="9.9" height="8" fill="#bdbdbd" stroke="#cfcfcf" stroke-width="1"/><rect x="786.400" y="180.9" width="4" height="7" fill="#444"/><rect x="800.800" y="180.500" width="7" height="5.500" fill="#7a7a7a" stroke="#cfcfcf" stroke-width="1"/><rect x="802" y="179.500" width="2.500" height="1.200" fill="#cfcfcf"/><circle cx="808.700" cy="185.300" r="3" fill="#6a6a6a" stroke="#cfcfcf" stroke-width="1"/><circle cx="808.700" cy="185.300" r="1.200" fill="#aaa"/><circle cx="821.500" cy="182.800" r="2.800" fill="#e0e0e0"/><circle cx="819.300" cy="186.300" r="2.800" fill="#c2c2c2"/><circle cx="823.700" cy="186.300" r="2.800" fill="#d4d4d4"/><path d="M821.500 184v2.500" stroke="#444" stroke-width="1"/><rect x="832.2" y="180.4" width="10.2" height="8" fill="#6a6a6a" stroke="#cfcfcf" stroke-width="1"/><path d="M835.600 180.4v8M839 180.4v8M832.200 183.1h10.200M832.200 185.8h10.200" stroke="#cfcfcf" stroke-width=".8"/><rect x="762.8" y="197.8" width="9.8" height="7.8" fill="#8a8a8a" stroke="#cfcfcf" stroke-width="1"/><path d="M764.8 204.3c2.500-.5 3-4.500 6-5" stroke="#222" stroke-width="1.500" fill="none"/><rect x="778.4" y="197.8" width="9.8" height="7.8" fill="#8a8a8a" stroke="#cfcfcf" stroke-width="1"/><path d="M778.9 205.10000000000002L787.6999999999999 198.3V201.8L783.4 205.10000000000002z" fill="#555"/><path d="M778.9 201.8L783.4 198.3" stroke="#ddd" stroke-width="1"/><rect x="793.9" y="197.8" width="9.8" height="7.8" fill="#8a8a8a" stroke="#cfcfcf" stroke-width="1"/><path d="M794.4 205.10000000000002V202.8l3-1l2-2l3.800-1.500V205.10000000000002z" fill="#2e2e2e"/><path d="M794.4 201.8l3-1l2-2l3.800-.5" stroke="#eee" stroke-width="1" fill="none"/><rect x="809.4" y="197.8" width="9.8" height="7.8" fill="#8a8a8a" stroke="#cfcfcf" stroke-width="1"/><path d="M809.9 198.3L818.6999999999999 205.10000000000002M818.6999999999999 198.3L809.9 205.10000000000002" stroke="#ddd" stroke-width="1"/><rect x="824.8" y="197.8" width="9.8" height="7.8" fill="#8a8a8a" stroke="#cfcfcf" stroke-width="1"/><rect x="825.3" y="198.3" width="8.800" height="6.800" fill="url(#gmg)"/></svg>
<div class="a" style="left:732px;top:211px;width:143px;height:2.5px;background:#2e2e2e;"></div>
<div class="a" style="left:732px;top:213.5px;width:143px;height:11px;background:#3c3c3c;"></div>
<div class="a" style="left:732.5px;top:213.5px;width:27.5px;height:11.5px;background:#535353;"></div>
<div class="a" style="left:760.8px;top:214.3px;width:36px;height:10.2px;background:#464646;"></div>
<div class="a" style="left:797.6px;top:214.3px;width:25.5px;height:10.2px;background:#464646;"></div>
<div class="t" style="left:737.00px;top:215.60px;font-size:8px;color:#f2f2f2;font-weight:bold;transform:scaleX(0.7559);">Layers</div>
<div class="t" style="left:765.00px;top:215.60px;font-size:8px;color:#a8a8a8;transform:scaleX(0.7988);">Channels</div>
<div class="t" style="left:801.50px;top:215.60px;font-size:8px;color:#a8a8a8;transform:scaleX(0.7821);">Paths</div>
<svg class="a" style="left:863.5px;top:216.5px;" width="9" height="6" viewBox="0 0 9 6"><path d="M0 1.500h3L1.500 3.300z" fill="#d8d8d8"/><path d="M4 .5h5M4 2.500h5M4 4.500h5" stroke="#8e8e8e" stroke-width="1"/></svg>
<div class="a" style="left:736.4px;top:228.2px;width:42.6px;height:11.8px;background:#5a5a5a;border:1px solid #454545;border-radius:2px;box-shadow:inset 0 1px 0 #6a6a6a"></div>
<svg class="a" style="left:771.5px;top:229.6px;" width="5" height="9" viewBox="0 0 5 9"><path d="M.8 3.600L2.500 1.500L4.200 3.600zM.8 5.400L2.500 7.500L4.200 5.400z" fill="#b8b8b8"/></svg>
<svg class="a" style="left:739.5px;top:231px;" width="7" height="7" viewBox="0 0 7 7"><circle cx="4" cy="2.800" r="2.100" fill="none" stroke="#cfcfcf" stroke-width="1"/><path d="M2.500 4.300L.6 6.400" stroke="#cfcfcf" stroke-width="1.200"/></svg>
<div class="t" style="left:749.20px;top:230.50px;font-size:8.2px;color:#b4b4b4;transform:scaleX(0.7921);">Kind</div>
<svg class="a" style="left:785px;top:227px;" width="90" height="14" viewBox="785 227 90 14"><rect x="787.500" y="230" width="8.600" height="7.600" fill="none" stroke="#cfcfcf" stroke-width="1.100"/><path d="M788.500 236.500l2.300-3l1.600 1.800l1-1l1.500 2.200z" fill="#cfcfcf"/><circle cx="793.800" cy="232.200" r=".8" fill="#cfcfcf"/><circle cx="806.700" cy="233.800" r="3.600" fill="#4a4a4a" stroke="#cfcfcf" stroke-width="1"/><path d="M804.200 236.300a3.600 3.600 0 0 1 5-5z" fill="#cfcfcf"/><text x="818.500" y="238" font-family="Liberation Serif,serif" font-size="11.500" fill="#cfcfcf">T</text><rect x="834.600" y="230.600" width="6.600" height="6.600" fill="none" stroke="#cfcfcf" stroke-width="1"/><path d="M833.500 229.500h2.200v2.200h-2.200zM840.100 229.500h2.200v2.200h-2.200zM833.500 236.100h2.200v2.200h-2.200zM840.100 236.100h2.200v2.200h-2.200z" fill="#cfcfcf"/><path d="M849.500 232.500h3v-3h3.500v9h-6.500z" fill="#cfcfcf"/><path d="M850.500 233.300l2.500-2.600" stroke="#cfcfcf" stroke-width=".9"/><rect x="866.300" y="229" width="5" height="9.500" rx="1" fill="#3a3a3a" stroke="#2c2c2c" stroke-width=".6"/><rect x="867" y="229.700" width="3.600" height="3.600" fill="#9a9a9a"/></svg>
<div class="a" style="left:732px;top:242.8px;width:143px;height:1px;background:#474747;"></div>
<div class="a" style="left:736.4px;top:246.4px;width:69.6px;height:11.6px;background:#5a5a5a;border:1px solid #454545;border-radius:2px;box-shadow:inset 0 1px 0 #6a6a6a"></div>
<svg class="a" style="left:798.5px;top:247.70000000000002px;" width="5" height="9" viewBox="0 0 5 9"><path d="M.8 3.600L2.500 1.500L4.200 3.600zM.8 5.400L2.500 7.500L4.200 5.400z" fill="#b8b8b8"/></svg>
<div class="t" style="left:741.00px;top:248.50px;font-size:8.2px;color:#a4a4a4;transform:scaleX(0.7946);">Normal</div>
<div class="t" style="left:811.20px;top:248.60px;font-size:8px;color:#f2f2f2;transform:scaleX(0.7838);">Opacity:</div>
<div class="a" style="left:838.4px;top:246.4px;width:22px;height:11.6px;background:#464646;border:1px solid #3e3e3e"></div>
<div class="t" style="left:841.40px;top:248.70px;font-size:7.8px;color:#727272;transform:scaleX(0.8020);">100%</div>
<div class="a" style="left:860.4px;top:246.4px;width:11.2px;height:11.6px;background:#707070;border-radius:1px"></div>
<svg class="a" style="left:863.8px;top:251.1px;" width="4.4" height="3" viewBox="0 0 4.4 3"><path d="M0 0h4.400L2.200 2.800z" fill="#fff"/></svg>
<div class="a" style="left:732px;top:260.3px;width:143px;height:1px;background:#474747;"></div>
<div class="t" style="left:736.30px;top:266.60px;font-size:8px;color:#f2f2f2;transform:scaleX(0.8106);">Lock:</div>
<svg class="a" style="left:755px;top:263px;" width="55" height="15" viewBox="755 263 55 15"><rect x="757.500" y="267" width="7" height="7" fill="none" stroke="#9a9a9a" stroke-width=".8"/><path d="M757.500 267h2.300v2.300h-2.300zM762.200 267h2.300v2.300h-2.300zM759.800 269.300h2.400v2.400h-2.400zM757.500 271.700h2.300v2.300h-2.300zM762.200 271.700h2.300v2.300h-2.300z" fill="#a8a8a8"/><path d="M780.500 266.500L776 271.300" stroke="#a8a8a8" stroke-width="1.200"/><path d="M771.500 274.800c1.600 .3 3.800 0 4.600-2.200l-1.300-1.200c-1.600 .3-1.900 2.300-3.300 3.400z" fill="#a8a8a8"/><path d="M789.800 267.200v6.600M786.500 270.500h6.600" stroke="#d0d0d0" stroke-width="1"/><path d="M789.800 266l1.500 1.800h-3zM789.800 275l1.500-1.800h-3zM785.300 270.500l1.800-1.500v3zM794.300 270.500l-1.800-1.500v3z" fill="#d0d0d0"/><rect x="800.800" y="270" width="6.600" height="5" rx=".6" fill="#d0d0d0"/><path d="M802.200 270v-1.800a1.900 1.900 0 0 1 3.800 0v1.800" fill="none" stroke="#d0d0d0" stroke-width="1.100"/></svg>
<div class="t" style="left:825.20px;top:266.60px;font-size:8px;color:#f2f2f2;transform:scaleX(0.7877);">Fill:</div>
<div class="a" style="left:838.4px;top:264px;width:22px;height:11.6px;background:#464646;border:1px solid #3e3e3e"></div>
<div class="t" style="left:841.40px;top:265.70px;font-size:7.8px;color:#727272;transform:scaleX(0.8020);">100%</div>
<div class="a" style="left:860.4px;top:264px;width:11.2px;height:11.6px;background:#707070;border-radius:1px"></div>
<svg class="a" style="left:863.8px;top:268.7px;" width="4.4" height="3" viewBox="0 0 4.4 3"><path d="M0 0h4.400L2.200 2.800z" fill="#fff"/></svg>
<div class="a" style="left:732px;top:279.5px;width:143px;height:1px;background:#3e3e3e;"></div>
<div class="a" style="left:732px;top:280.2px;width:134px;height:173px;background:#454545;"></div>
<div class="a" style="left:865.8px;top:280.2px;width:9.2px;height:173px;background:#4a4a4a;border-left:1px solid #3c3c3c"></div>
<div class="a" style="left:732px;top:280.2px;width:21.2px;height:16.8px;background:#535353;"></div>
<div class="a" style="left:752.7px;top:280.2px;width:112.8px;height:16.8px;background:#596a84;"></div>
<div class="a" style="left:732px;top:297px;width:134px;height:0.9px;background:#3f3f3f;"></div>
<svg class="a" style="left:737.2px;top:285.3px;" width="10.0" height="7.0" viewBox="0 0 10 7"><path d="M.4 3.500C2 .8 8 .8 9.600 3.500C8 6.200 2 6.200 .4 3.500z" fill="#444" stroke="#b2b2b2" stroke-width=".8"/><circle cx="5" cy="3.300" r="1.600" fill="#c4c4c4"/></svg>
<svg class="a" style="left:758.5px;top:283.8px;" width="9" height="9" viewBox="0 0 9 9"><circle cx="4.500" cy="4.500" r="3.700" fill="#495870" stroke="#dcdcdc" stroke-width="1"/><path d="M1.900 7.100a3.700 3.700 0 0 1 5.200-5.200z" fill="#dcdcdc"/></svg>
<svg class="a" style="left:776px;top:284px;" width="5" height="9" viewBox="0 0 5 9"><rect x=".8" y=".6" width="3.400" height="3.600" rx="1.500" fill="none" stroke="#e0e0e0" stroke-width=".9"/><rect x=".8" y="4.800" width="3.400" height="3.600" rx="1.500" fill="none" stroke="#e0e0e0" stroke-width=".9"/><path d="M2.500 3v3" stroke="#e0e0e0" stroke-width=".9"/></svg>
<div class="a" style="left:784.6px;top:283.4px;width:19.8px;height:11.4px;background:#fff;border:1px solid #222"></div>
<svg class="a" style="left:782.6px;top:281.4px;" width="23.8" height="15.4" viewBox="0 0 23.8 15.4"><path d="M.5 4V.5H4M19.800 .5H23.300V4M23.300 11.400V14.900H19.800M4 14.900H.5V11.400" fill="none" stroke="#e8e8e8" stroke-width="1"/></svg>
<div class="t" style="left:811.50px;top:285.60px;font-size:8px;color:#f4f4f4;transform:scaleX(0.7719);">Levels 1</div>
<div class="a" style="left:732px;top:297.8px;width:134px;height:40.5px;background:#535353;"></div>
<div class="a" style="left:752.4px;top:297.8px;width:0.8px;height:40.5px;background:#454545;"></div>
<div class="a" style="left:732px;top:338.3px;width:134px;height:0.9px;background:#3f3f3f;"></div>
<svg class="a" style="left:737.2px;top:303.0px;" width="10.0" height="7.0" viewBox="0 0 10 7"><path d="M.4 3.500C2 .8 8 .8 9.600 3.500C8 6.200 2 6.200 .4 3.500z" fill="#444" stroke="#b2b2b2" stroke-width=".8"/><circle cx="5" cy="3.300" r="1.600" fill="#c4c4c4"/></svg>
<div class="a" style="left:754.600px;top:300.300px;width:20px;height:11.600px;border:1px solid #1e1e1e;background:linear-gradient(160deg,#0d4fa0 0%,#2a78c8 40%,#5fa0dc 60%,#1a5fb4 100%);overflow:hidden"><div class="a" style="left:7px;top:2px;width:11px;height:4px;background:#cfe4f6;filter:blur(1.500px);opacity:.85"></div></div>
<div class="t" style="left:781.30px;top:303.60px;font-size:8px;color:#f4f4f4;transform:scaleX(0.7996);">Mây Background</div>
<div class="t" style="left:848.50px;top:302.35px;font-size:9.5px;color:#e0e0e0;font-style:italic;font-family:"Liberation Serif",serif;transform:scaleX(1.0211);">fx</div>
<div class="a" style="left:858.8px;top:299px;width:6.5px;height:15.5px;background:#8c8c8c;border-radius:1px"></div>
<svg class="a" style="left:860px;top:305px;" width="4" height="3" viewBox="0 0 4 3"><path d="M0 2.800h4L2 0z" fill="#1e1e1e"/></svg>
<svg class="a" style="left:764.5px;top:317.9px;" width="8.0" height="5.6000000000000005" viewBox="0 0 10 7"><path d="M.4 3.500C2 .8 8 .8 9.600 3.500C8 6.200 2 6.200 .4 3.500z" fill="#444" stroke="#b2b2b2" stroke-width=".8"/><circle cx="5" cy="3.300" r="1.600" fill="#c4c4c4"/></svg>
<div class="t" style="left:777.00px;top:316.60px;font-size:8px;color:#f4f4f4;transform:scaleX(0.8022);">Effects</div>
<svg class="a" style="left:775.5px;top:329.9px;" width="8.0" height="5.6000000000000005" viewBox="0 0 10 7"><path d="M.4 3.500C2 .8 8 .8 9.600 3.500C8 6.200 2 6.200 .4 3.500z" fill="#444" stroke="#b2b2b2" stroke-width=".8"/><circle cx="5" cy="3.300" r="1.600" fill="#c4c4c4"/></svg>
<div class="t" style="left:788.00px;top:328.60px;font-size:8px;color:#f4f4f4;transform:scaleX(0.7668);">Color Overlay</div>
<div class="a" style="left:732px;top:339.2px;width:134px;height:16.8px;background:#535353;"></div>
<div class="a" style="left:752.4px;top:339.2px;width:0.8px;height:16.8px;background:#454545;"></div>
<div class="a" style="left:732px;top:356px;width:134px;height:0.9px;background:#3f3f3f;"></div>
<svg class="a" style="left:737.2px;top:344.3px;" width="10.0" height="7.0" viewBox="0 0 10 7"><path d="M.4 3.500C2 .8 8 .8 9.600 3.500C8 6.200 2 6.200 .4 3.500z" fill="#444" stroke="#b2b2b2" stroke-width=".8"/><circle cx="5" cy="3.300" r="1.600" fill="#c4c4c4"/></svg>
<div class="a" style="left:754.6px;top:342px;width:20px;height:11.6px;background:#fff;border:1px solid #222"></div>
<div class="t" style="left:782.00px;top:344.60px;font-size:8px;color:#f4f4f4;font-style:italic;transform:scaleX(0.8197);">Background</div>
<svg class="a" style="left:848px;top:343.5px;" width="7" height="9" viewBox="0 0 7 9"><rect x=".6" y="3.800" width="5.800" height="4.600" rx=".6" fill="none" stroke="#d8d8d8" stroke-width="1"/><path d="M1.800 3.800v-1.500a1.700 1.700 0 0 1 3.400 0v1.500" fill="none" stroke="#d8d8d8" stroke-width="1"/></svg>
<div class="a" style="left:732px;top:453.5px;width:143px;height:1px;background:#383838;"></div>
<div class="a" style="left:732px;top:454.5px;width:143px;height:12.5px;background:#535353;"></div>
<svg class="a" style="left:740px;top:455px;" width="120" height="12" viewBox="740 455 120 12"><rect x="744.500" y="459" width="5" height="3.600" rx="1.800" fill="none" stroke="#8a8a8a" stroke-width="1"/><rect x="748.500" y="459" width="5" height="3.600" rx="1.800" fill="none" stroke="#8a8a8a" stroke-width="1"/><text x="762.500" y="464.500" font-family="Liberation Serif,serif" font-style="italic" font-size="10.500" fill="#e6e6e6">fx</text><path d="M772 464.800h2l-1 1.200z" fill="#cdcdcd"/><rect x="779.800" y="457.300" width="8.800" height="7" fill="#cdcdcd"/><circle cx="784.200" cy="460.800" r="2.100" fill="#444"/><circle cx="801.500" cy="460.600" r="3.600" fill="#444" stroke="#cdcdcd" stroke-width="1"/><path d="M799 463.100a3.600 3.600 0 0 1 5-5z" fill="#cdcdcd"/><path d="M806 464.800h2l-1 1.200z" fill="#cdcdcd"/><path d="M814 458h3l1 1.200h4.500v5.300H814z" fill="#cdcdcd"/><path d="M832.500 457.300h7v7h-4l-3-3z" fill="#cdcdcd"/><path d="M832.500 461.300h3v3" fill="#7a7a7a"/><path d="M849.300 459h6l-.6 5.800h-4.800zM848.500 458h7.600M851 457h2.600" fill="none" stroke="#cdcdcd" stroke-width="1"/><path d="M851 460v4M853.500 460v4" stroke="#cdcdcd" stroke-width=".7"/></svg>
<div class="a" style="left:275.4px;top:128.4px;width:324.6px;height:73.0px;background:#f0f0f0;border:1.300px solid #9fc13c;box-shadow:0 3px 11px rgba(20,50,90,.34),0 0 4px rgba(20,50,90,.2)"></div>
<div class="a" style="left:276.7px;top:129.70000000000002px;width:322.0px;height:16px;background:#fff;"></div>
<div class="t" style="left:278.80px;top:132.80px;font-size:8.6px;color:#1c1c1c;transform:scaleX(0.8578);">Brush Name</div>
<svg class="a" style="left:586px;top:133.8px;" width="7.4" height="7.4" viewBox="0 0 7.4 7.4"><path d="M.4 .4L7 7M7 .4L.4 7" stroke="#1a1a1a" stroke-width="1.100"/></svg>
<div class="a" style="left:282.5px;top:152px;width:42px;height:42.2px;background:#fff;border:1px solid #dcdcdc"></div>
<div class="a" style="left:287.400px;top:152.800px;width:32px;height:32px;border-radius:50%;background:radial-gradient(circle closest-side,#000 0%,#0a0a0a 14%,#444 34%,#838383 54%,#bcbcbc 72%,#e8e8e8 88%,#fff 100%)"></div>
<div class="t" style="left:300.70px;top:186.20px;font-size:6.8px;color:#222;transform:scaleX(0.8461);">87</div>
<div class="t" style="left:333.40px;top:161.70px;font-size:8.8px;color:#1c1c1c;transform:scaleX(0.8488);">Name:</div>
<div class="a" style="left:358.2px;top:158.9px;width:179.5px;height:13.1px;background:#fff;border:1px solid #ababab"></div>
<div class="a" style="left:361.9px;top:161.1px;width:45.3px;height:8.9px;background:#1669ca;"></div>
<div class="t" style="left:363.00px;top:161.70px;font-size:8.8px;color:#fff;transform:scaleX(0.8234);">Clouds Brush</div>
<div class="a" style="left:360.7px;top:177.5px;width:8.6px;height:8.6px;background:#fff;border:1px solid #3c3c3c"></div>
<svg class="a" style="left:361.2px;top:178px;" width="8" height="8" viewBox="0 0 8 8"><path d="M1.600 4L3.300 5.900L6.300 1.800" fill="none" stroke="#222" stroke-width="1.100"/></svg>
<div class="t" style="left:371.20px;top:177.70px;font-size:8.8px;color:#1c1c1c;transform:scaleX(0.8671);">Capture Brush Size in Preset</div>
<div class="a" style="left:543.5px;top:158.2px;width:48.9px;height:11.6px;background:linear-gradient(#eaf4fc,#dcecf9);border:1px solid #3c8ad8;border-radius:1px"></div>
<div class="t" style="left:562.60px;top:159.70px;font-size:8.8px;color:#111;transform:scaleX(0.8651);">OK</div>
<div class="a" style="left:543.5px;top:176.3px;width:48.9px;height:11.6px;background:linear-gradient(#f0f0f0,#e2e2e2);border:1px solid #adadad;border-radius:1px"></div>
<div class="t" style="left:555.80px;top:177.70px;font-size:8.8px;color:#111;transform:scaleX(0.8944);">Cancel</div>
<svg class="a" style="left:584px;top:166.5px;" width="10" height="15" viewBox="0 0 10 15"><path d="M.7 .7V11.500L3.300 9L5.300 13.600L7 12.800L5 8.300H8.600z" fill="#fff" stroke="#111" stroke-width=".9" stroke-linejoin="round"/></svg>
</body></html>
